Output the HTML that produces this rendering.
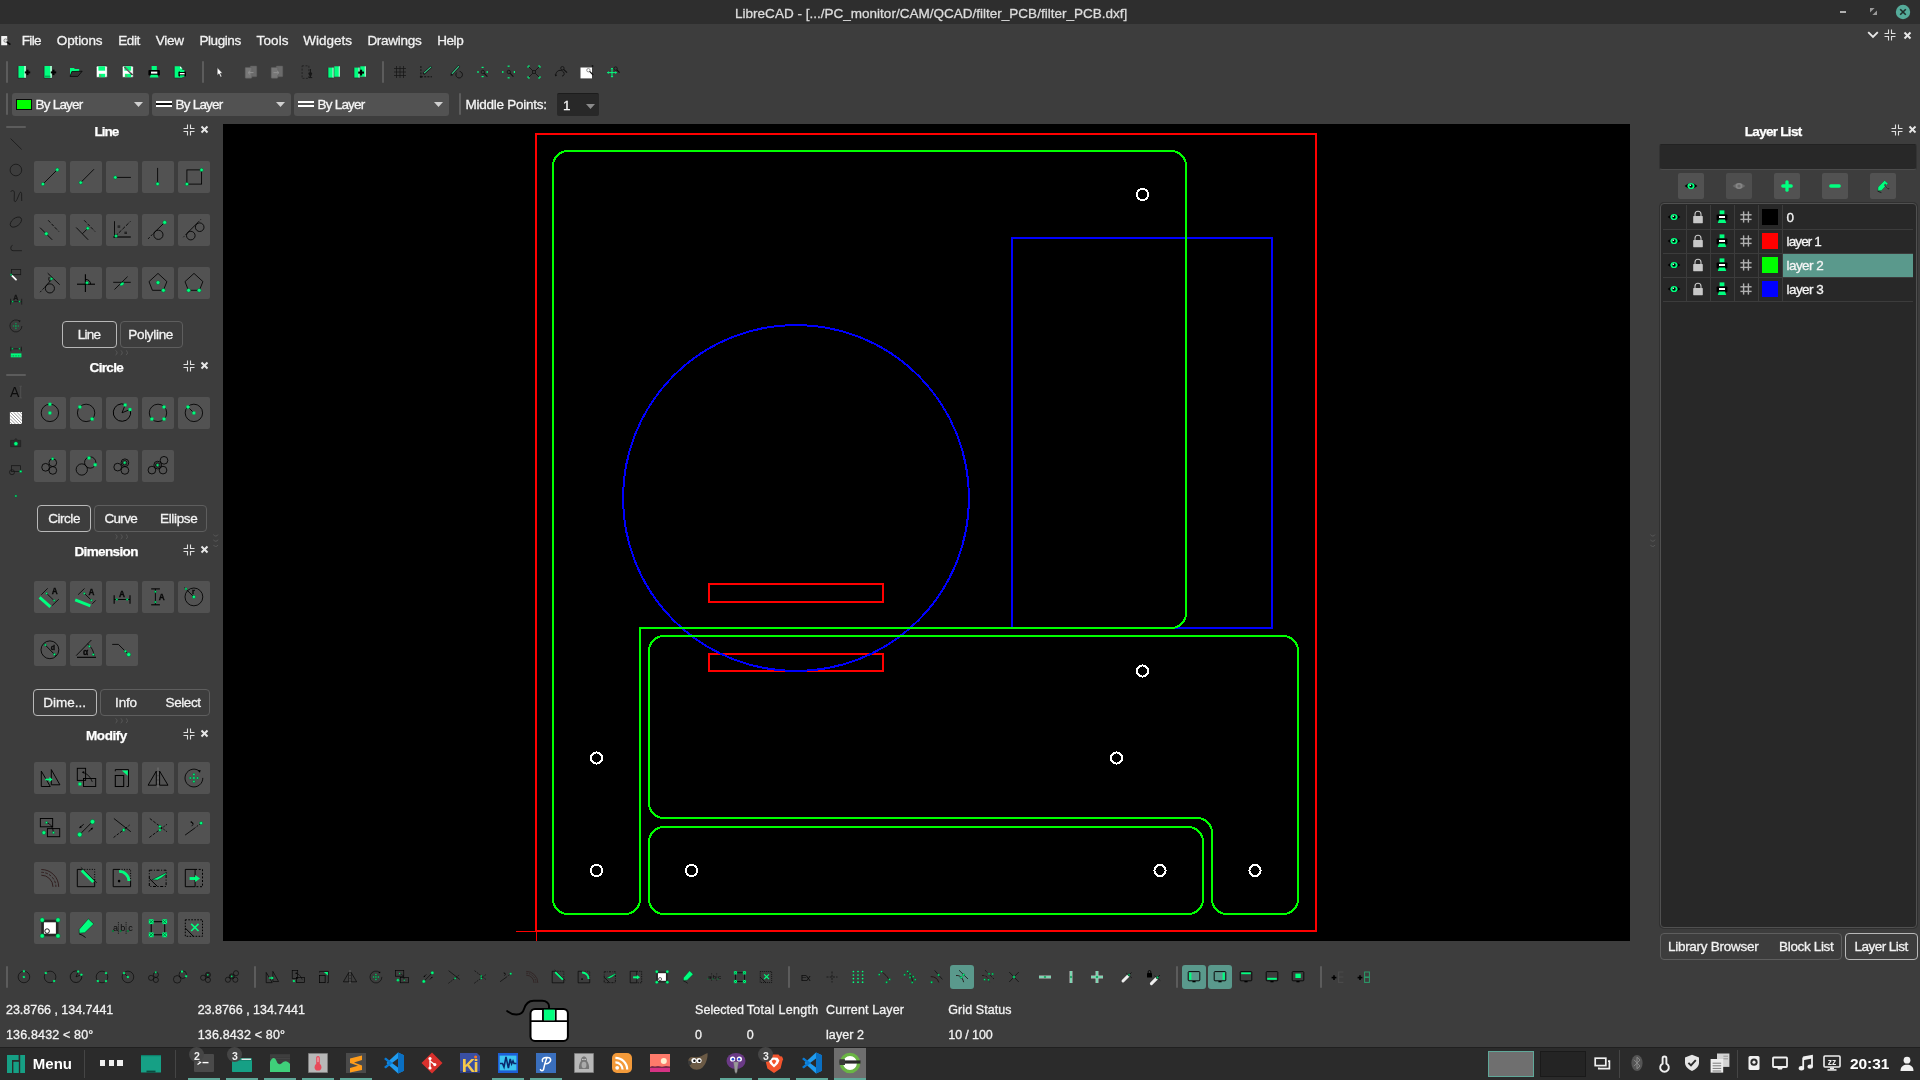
<!DOCTYPE html><html><head><meta charset="utf-8"><title>LibreCAD</title><style>
html,body{margin:0;padding:0;background:#3d3d3d;width:1920px;height:1080px;overflow:hidden}
body{position:relative;font-family:"Liberation Sans",sans-serif;}
#w{position:absolute;left:0;top:0;width:1920px;height:1080px;will-change:transform}
.a{position:absolute}
.t{position:absolute;white-space:nowrap;line-height:20px;height:20px;-webkit-text-stroke:0.3px currentColor}
svg{overflow:visible}
</style></head><body><div id="w"><div class="a" style="left:0px;top:0px;width:1920px;height:24px;background:#2e2e2e;"></div>
<span class="t" style="top:3.5px;font-size:13.5px;color:#dcdcdc;left:735.05px;letter-spacing:0.011px;">LibreCAD - [.../PC_monitor/CAM/QCAD/filter_PCB/filter_PCB.dxf]</span>
<div class="a" style="left:1840px;top:11px;width:6.4px;height:2px;background:#b0b0b0;"></div>
<svg style="position:absolute;left:1869.6px;top:8.4px" width="7" height="7" viewBox="0 0 7 7"><path d="M0 0 L4.6 0 L0 4.6 Z" fill="#9a9a9a"/><path d="M7 7 L2.4 7 L7 2.4 Z" fill="#9a9a9a"/></svg>
<svg style="position:absolute;left:1895px;top:4px" width="16" height="16" viewBox="0 0 16 16"><circle cx="8" cy="8" r="7.2" fill="#55ab9a"/><line x1="5.2" y1="5.2" x2="10.8" y2="10.8" stroke="#1f2d2a" stroke-width="1.6"/><line x1="10.8" y1="5.2" x2="5.2" y2="10.8" stroke="#1f2d2a" stroke-width="1.6"/></svg>
<span class="t" style="top:31px;font-size:13.5px;color:#f2f2f2;left:21.70px;letter-spacing:-0.616px;">File</span>
<span class="t" style="top:31px;font-size:13.5px;color:#f2f2f2;left:56.80px;letter-spacing:-0.120px;">Options</span>
<span class="t" style="top:31px;font-size:13.5px;color:#f2f2f2;left:118.20px;letter-spacing:-0.387px;">Edit</span>
<span class="t" style="top:31px;font-size:13.5px;color:#f2f2f2;left:155.70px;letter-spacing:-0.251px;">View</span>
<span class="t" style="top:31px;font-size:13.5px;color:#f2f2f2;left:199.40px;letter-spacing:-0.413px;">Plugins</span>
<span class="t" style="top:31px;font-size:13.5px;color:#f2f2f2;left:256.60px;letter-spacing:0.123px;">Tools</span>
<span class="t" style="top:31px;font-size:13.5px;color:#f2f2f2;left:303.30px;letter-spacing:-0.010px;">Widgets</span>
<span class="t" style="top:31px;font-size:13.5px;color:#f2f2f2;left:367.40px;letter-spacing:-0.281px;">Drawings</span>
<span class="t" style="top:31px;font-size:13.5px;color:#f2f2f2;left:437.20px;letter-spacing:-0.423px;">Help</span>
<svg style="position:absolute;left:0px;top:34px" width="12" height="12" viewBox="0 0 12 12"><rect x="1.2" y="2" width="6" height="9.2" fill="#f4f4f4" rx="0.5"/><circle cx="5.6" cy="6.6" r="1.7" fill="#e0e0e0" stroke="#777" stroke-width="0.8"/><line x1="6.8" y1="7.8" x2="10.4" y2="10.6" stroke="#0a0a0a" stroke-width="1.7"/></svg>
<svg style="position:absolute;left:1867.2px;top:30.4px" width="12" height="9" viewBox="0 0 12 9"><path d="M1.2 2.2 L6 7 L10.8 2.2" fill="none" stroke="#e8e8e8" stroke-width="1.9"/></svg>
<svg style="position:absolute;left:1884px;top:29px" width="12" height="12" viewBox="0 0 12 12"><path d="M4.5 0.5 L4.5 4.5 L0.5 4.5 M7.5 0.5 L7.5 4.5 L11.5 4.5 M4.5 11.5 L4.5 7.5 L0.5 7.5 M7.5 11.5 L7.5 7.5 L11.5 7.5" fill="none" stroke="#e0e0e0" stroke-width="1.1"/></svg>
<svg style="position:absolute;left:1902.6px;top:30.6px" width="9" height="9" viewBox="0 0 9 9"><line x1="1.5" y1="1.5" x2="7.5" y2="7.5" stroke="#e8e8e8" stroke-width="1.9"/><line x1="7.5" y1="1.5" x2="1.5" y2="7.5" stroke="#e8e8e8" stroke-width="1.9"/></svg>
<div class="a" style="left:6px;top:61px;width:2px;height:22px;background:#5c5c5c;border-radius:1px;"></div>
<svg style="position:absolute;left:15px;top:64px" width="16" height="16" viewBox="0 0 16 16"><rect x="3.2" y="2" width="7.4" height="12" fill="#00ff7f"/><rect x="9.4" y="2" width="1.3" height="12" fill="#e8fff2"/><path d="M3 2 L3 14.2 L10.8 14.2" fill="none" stroke="#222" stroke-width="0.6"/><line x1="9.8" y1="8.4" x2="15.2" y2="8.4" stroke="#000" stroke-width="2"/><line x1="12.5" y1="5.7" x2="12.5" y2="11.1" stroke="#000" stroke-width="2"/></svg>
<svg style="position:absolute;left:41px;top:64px" width="16" height="16" viewBox="0 0 16 16"><rect x="3.2" y="2" width="7.4" height="12" fill="#00ff7f"/><rect x="9.4" y="2" width="1.3" height="12" fill="#e8fff2"/><path d="M3 2 L3 14.2 L10.8 14.2" fill="none" stroke="#222" stroke-width="0.6"/><rect x="3.2" y="11.6" width="6.2" height="1.6" fill="#00b359"/><line x1="9.8" y1="8.4" x2="15.2" y2="8.4" stroke="#000" stroke-width="2"/><line x1="12.5" y1="5.7" x2="12.5" y2="11.1" stroke="#000" stroke-width="2"/></svg>
<svg style="position:absolute;left:67px;top:64px" width="16" height="16" viewBox="0 0 16 16"><path d="M3 4 L7 4 L7.8 5 L12.2 5 L12.2 7.6 L5 7.6 L3 12 Z" fill="#00ff7f"/><path d="M4.8 7.6 L15.2 7.2 L10.8 12.4 L3 12.4 Z" fill="#333" stroke="#000" stroke-width="0.7"/></svg>
<svg style="position:absolute;left:93px;top:64px" width="16" height="16" viewBox="0 0 16 16"><rect x="3.3" y="2" width="11" height="11.4" fill="#fff" stroke="#222" stroke-width="0.6" rx="1.2"/><rect x="5.4" y="2.3" width="6.8" height="4.4" fill="#00ff7f"/><rect x="5.9" y="9.8" width="6.3" height="3.4" fill="#00ff7f"/><rect x="6.6" y="10.6" width="1.6" height="2.2" fill="#6a6"/></svg>
<svg style="position:absolute;left:119px;top:64px" width="16" height="16" viewBox="0 0 16 16"><rect x="3.3" y="2" width="11" height="11.4" fill="#fff" stroke="#222" stroke-width="0.6" rx="1.2"/><rect x="5.4" y="2.3" width="6.8" height="4.4" fill="#00ff7f"/><rect x="5.9" y="9.8" width="6.3" height="3.4" fill="#00ff7f"/><rect x="6.6" y="10.6" width="1.6" height="2.2" fill="#6a6"/><line x1="5.5" y1="3" x2="13.5" y2="11" stroke="#333" stroke-width="1.6"/><line x1="6" y1="3.4" x2="12" y2="9.4" stroke="#ccc" stroke-width="0.6"/></svg>
<svg style="position:absolute;left:145px;top:64px" width="16" height="16" viewBox="0 0 16 16"><rect x="6.6" y="2" width="5.2" height="4.4" fill="#00ff7f"/><rect x="3.4" y="6.1" width="11.5" height="5.4" fill="#000" rx="0.8"/><rect x="6" y="7.6" width="6.3" height="2" fill="#fff"/><path d="M5.8 10.8 L12.5 10.8 L13.6 13.6 L4.7 13.6 Z" fill="#00ff7f"/></svg>
<svg style="position:absolute;left:171px;top:64px" width="16" height="16" viewBox="0 0 16 16"><path d="M3.4 2.2 L9 2.2 L11.3 4.5 L11.3 13.9 L3.4 13.9 Z" fill="#00ff7f"/><path d="M9 2.2 L11.3 4.5 L9 4.5 Z" fill="#fff"/><path d="M3.2 2.2 L3.2 14 L11.3 14" fill="none" stroke="#222" stroke-width="0.6"/><rect x="7.4" y="7.4" width="7.6" height="5" fill="#000" rx="1"/><rect x="9" y="6" width="4.4" height="2" fill="#00ff7f"/><rect x="8.8" y="9" width="4.8" height="1.4" fill="#fff"/><rect x="9" y="11.3" width="4.4" height="1.6" fill="#00ff7f"/></svg>
<svg style="position:absolute;left:212px;top:64px" width="16" height="16" viewBox="0 0 16 16"><path d="M5.2 3.6 L5.2 11.4 L7 9.8 L8.6 13.2 L9.9 12.6 L8.4 9.3 L10.6 9.2 Z" fill="#fff" stroke="#222" stroke-width="0.5"/></svg>
<svg style="position:absolute;left:243px;top:64px" width="16" height="16" viewBox="0 0 16 16"><rect x="7.2" y="2" width="6.6" height="10.8" fill="#6b6b6b" stroke="#5a5a5a" stroke-width="0.5" rx="0.6"/><rect x="2.2" y="3.4" width="6.6" height="10.8" fill="#777" stroke="#5f5f5f" stroke-width="0.5" rx="0.6"/><line x1="5.5" y1="8.6" x2="10.5" y2="8.6" stroke="#909090" stroke-width="1"/><path d="M7 6.8 L5 8.6 L7 10.4" fill="none" stroke="#909090" stroke-width="1"/></svg>
<svg style="position:absolute;left:269px;top:64px" width="16" height="16" viewBox="0 0 16 16"><rect x="7.2" y="2" width="6.6" height="10.8" fill="#6b6b6b" stroke="#5a5a5a" stroke-width="0.5" rx="0.6"/><rect x="2.2" y="3.4" width="6.6" height="10.8" fill="#777" stroke="#5f5f5f" stroke-width="0.5" rx="0.6"/><line x1="4.5" y1="8.6" x2="9.5" y2="8.6" stroke="#909090" stroke-width="1"/><path d="M8 6.8 L10 8.6 L8 10.4" fill="none" stroke="#909090" stroke-width="1"/></svg>
<svg style="position:absolute;left:299px;top:64px" width="16" height="16" viewBox="0 0 16 16"><rect x="3.1" y="1.8" width="6.8" height="12.6" fill="none" stroke="#1a1a1a" stroke-width="0.7" stroke-dasharray="2 1.4"/><path d="M11.4 5 L11.4 12.6 M10 9 L11.4 12.8 L12.8 9 Z M9.8 13.6 L13.2 13.6" fill="none" stroke="#151515" stroke-width="1"/></svg>
<svg style="position:absolute;left:326px;top:64px" width="16" height="16" viewBox="0 0 16 16"><rect x="2.1" y="3.6" width="5.2" height="10.2" fill="#00ff7f"/><rect x="6.6" y="3.6" width="0.9" height="10.2" fill="#dfe"/><rect x="8.3" y="2.3" width="5.2" height="10.4" fill="#00ff7f"/><rect x="12.8" y="2.3" width="0.9" height="10.4" fill="#dfe"/><path d="M2 3.6 L2 14 L7.4 14" fill="none" stroke="#222" stroke-width="0.5"/></svg>
<svg style="position:absolute;left:352px;top:64px" width="16" height="16" viewBox="0 0 16 16"><rect x="2.1" y="3.6" width="5.2" height="10.2" fill="#00ff7f"/><rect x="6.6" y="3.6" width="0.9" height="10.2" fill="#dfe"/><rect x="8.3" y="2.3" width="5.2" height="10.4" fill="#00ff7f"/><rect x="12.8" y="2.3" width="0.9" height="10.4" fill="#dfe"/><path d="M2 3.6 L2 14 L7.4 14" fill="none" stroke="#222" stroke-width="0.5"/><line x1="6.2" y1="8.6" x2="12" y2="8.6" stroke="#000" stroke-width="2.1"/><line x1="9.1" y1="5.7" x2="9.1" y2="11.5" stroke="#000" stroke-width="2.1"/></svg>
<svg style="position:absolute;left:392px;top:64px" width="16" height="16" viewBox="0 0 16 16"><line x1="4.5" y1="2" x2="4.5" y2="14" stroke="#151515" stroke-width="0.75"/><line x1="8" y1="2" x2="8" y2="14" stroke="#151515" stroke-width="0.75"/><line x1="11.5" y1="2" x2="11.5" y2="14" stroke="#151515" stroke-width="0.75"/><line x1="2" y1="4.5" x2="14" y2="4.5" stroke="#151515" stroke-width="0.75"/><line x1="2" y1="8" x2="14" y2="8" stroke="#151515" stroke-width="0.75"/><line x1="2" y1="11.5" x2="14" y2="11.5" stroke="#151515" stroke-width="0.75"/></svg>
<svg style="position:absolute;left:418px;top:64px" width="16" height="16" viewBox="0 0 16 16"><line x1="2.9" y1="2" x2="2.9" y2="12" stroke="#111" stroke-width="1" stroke-dasharray="2 1.2"/><line x1="3" y1="12.8" x2="14" y2="12.8" stroke="#111" stroke-width="1" stroke-dasharray="2 1.2"/><circle cx="2.9" cy="12.8" r="1.1" fill="#111"/><line x1="5.3" y1="10" x2="13.4" y2="2.6" stroke="#181818" stroke-width="2.4"/><line x1="6.1" y1="9.2" x2="13.1" y2="2.9" stroke="#3c8" stroke-width="1.1"/></svg>
<svg style="position:absolute;left:448px;top:64px" width="16" height="16" viewBox="0 0 16 16"><line x1="3.1" y1="10.7" x2="11.3" y2="1.9" stroke="#181818" stroke-width="2.4"/><line x1="3.9" y1="9.9" x2="11" y2="2.2" stroke="#3c8" stroke-width="1.1"/><path d="M8.6 8.6 A3.3 3.3 0 1 0 11.6 7.4" fill="none" stroke="#111" stroke-width="0.9"/><path d="M2.2 11.6 L4 9.6 L4.6 11.4 Z" fill="#111"/></svg>
<svg style="position:absolute;left:474px;top:64px" width="16" height="16" viewBox="0 0 16 16"><line x1="7.6" y1="3.4" x2="9.6" y2="3.4" stroke="#00ff7f" stroke-width="1.2"/><line x1="7.6" y1="12.6" x2="9.6" y2="12.6" stroke="#00ff7f" stroke-width="1.2"/><line x1="4" y1="7" x2="4" y2="9" stroke="#00ff7f" stroke-width="1.2"/><line x1="13.2" y1="7" x2="13.2" y2="9" stroke="#00ff7f" stroke-width="1.2"/><circle cx="8.8" cy="8" r="1.7" fill="none" stroke="#111" stroke-width="0.8"/><line x1="9.99" y1="9.19" x2="13.39" y2="12.59" stroke="#111" stroke-width="1.2"/></svg>
<svg style="position:absolute;left:500px;top:64px" width="16" height="16" viewBox="0 0 16 16"><line x1="7.6" y1="2.2" x2="9.6" y2="2.2" stroke="#00ff7f" stroke-width="1.2"/><line x1="7.6" y1="13.8" x2="9.6" y2="13.8" stroke="#00ff7f" stroke-width="1.2"/><line x1="2.8" y1="7" x2="2.8" y2="9" stroke="#00ff7f" stroke-width="1.2"/><line x1="14.4" y1="7" x2="14.4" y2="9" stroke="#00ff7f" stroke-width="1.2"/><circle cx="8.8" cy="8" r="1.7" fill="none" stroke="#111" stroke-width="0.8"/><line x1="9.99" y1="9.19" x2="13.39" y2="12.59" stroke="#111" stroke-width="1.2"/></svg>
<svg style="position:absolute;left:526px;top:64px" width="16" height="16" viewBox="0 0 16 16"><line x1="2.5" y1="2.5" x2="13.5" y2="13.5" stroke="#111" stroke-width="0.8"/><line x1="13.5" y1="2.5" x2="2.5" y2="13.5" stroke="#111" stroke-width="0.8"/><path d="M3.8 2 L2 2 L2 3.8" fill="none" stroke="#00ff7f" stroke-width="1"/><path d="M12.2 2 L14 2 L14 3.8" fill="none" stroke="#00ff7f" stroke-width="1"/><path d="M3.8 14 L2 14 L2 12.2" fill="none" stroke="#00ff7f" stroke-width="1"/><path d="M12.2 14 L14 14 L14 12.2" fill="none" stroke="#00ff7f" stroke-width="1"/><circle cx="8" cy="8" r="1.6" fill="#3d3d3d" stroke="#111" stroke-width="0.8"/></svg>
<svg style="position:absolute;left:553px;top:64px" width="16" height="16" viewBox="0 0 16 16"><path d="M2.6 11.6 C3 6 8 5 10.6 8 C12 10 10.6 12.4 9 12" fill="none" stroke="#111" stroke-width="0.9"/><path d="M1.6 10.4 L2.6 12.6 L4.2 11 Z" fill="#111"/><circle cx="9.4" cy="4.2" r="1.7" fill="none" stroke="#111" stroke-width="0.8"/><line x1="10.6" y1="5.4" x2="14" y2="8.6" stroke="#111" stroke-width="1.2"/></svg>
<svg style="position:absolute;left:579px;top:64px" width="16" height="16" viewBox="0 0 16 16"><rect x="1.5" y="3.5" width="11.5" height="10.9" fill="#fff"/><circle cx="9.4" cy="6.2" r="1.7" fill="none" stroke="#777" stroke-width="0.8"/><line x1="10.6" y1="7.4" x2="14.2" y2="11" stroke="#111" stroke-width="1.2"/><line x1="12.5" y1="2" x2="14.5" y2="2" stroke="#111" stroke-width="0.8"/><line x1="13.5" y1="1" x2="13.5" y2="3" stroke="#111" stroke-width="0.8"/></svg>
<svg style="position:absolute;left:605px;top:64px" width="16" height="16" viewBox="0 0 16 16"><line x1="2.5" y1="8.6" x2="11.5" y2="8.6" stroke="#00ff7f" stroke-width="1"/><line x1="7" y1="4.1" x2="7" y2="13.1" stroke="#00ff7f" stroke-width="1"/><path d="M3.6 7.6 L2.4 8.6 L3.6 9.6 M10.4 7.6 L11.6 8.6 L10.4 9.6 M6 5.2 L7 4 L8 5.2 M6 12 L7 13.2 L8 12" fill="none" stroke="#00ff7f" stroke-width="0.9"/><circle cx="10.6" cy="4.6" r="1.7" fill="none" stroke="#111" stroke-width="0.8"/><line x1="11.8" y1="5.8" x2="14.6" y2="8.6" stroke="#111" stroke-width="1.2"/></svg>
<div class="a" style="left:202px;top:61px;width:2px;height:22px;background:#5c5c5c;border-radius:1px;"></div>
<div class="a" style="left:382px;top:61px;width:2px;height:22px;background:#5c5c5c;border-radius:1px;"></div>
<div class="a" style="left:6px;top:93px;width:2px;height:22px;background:#5c5c5c;border-radius:1px;"></div>
<div class="a" style="left:12px;top:93px;width:137px;height:23px;background:#525252;border-radius:3px;"></div><div class="a" style="left:16px;top:98.5px;width:16px;height:11.5px;background:#00ff00;border:1px solid #0a0a0a;box-sizing:border-box;"></div><span class="t" style="top:95px;font-size:13.5px;color:#f5f5f5;left:35.50px;letter-spacing:-0.782px;">By Layer</span><svg style="position:absolute;left:134px;top:102px" width="9" height="5" viewBox="0 0 9 5"><path d="M0 0 L9 0 L4.5 5 Z" fill="#d0d0d0"/></svg>
<div class="a" style="left:152px;top:93px;width:139px;height:23px;background:#525252;border-radius:3px;"></div><div class="a" style="left:156px;top:100.5px;width:16px;height:2px;background:#fff;"></div><div class="a" style="left:156px;top:104.5px;width:16px;height:2px;background:#fff;"></div><div class="a" style="left:156px;top:102.5px;width:16px;height:2px;background:#111;"></div><span class="t" style="top:95px;font-size:13.5px;color:#f5f5f5;left:175.50px;letter-spacing:-0.782px;">By Layer</span><svg style="position:absolute;left:276px;top:102px" width="9" height="5" viewBox="0 0 9 5"><path d="M0 0 L9 0 L4.5 5 Z" fill="#d0d0d0"/></svg>
<div class="a" style="left:294px;top:93px;width:155px;height:23px;background:#525252;border-radius:3px;"></div><div class="a" style="left:298px;top:100.5px;width:16px;height:2.5px;background:#fff;"></div><div class="a" style="left:298px;top:104.5px;width:16px;height:2.5px;background:#fff;"></div><span class="t" style="top:95px;font-size:13.5px;color:#f5f5f5;left:317.50px;letter-spacing:-0.782px;">By Layer</span><svg style="position:absolute;left:434px;top:102px" width="9" height="5" viewBox="0 0 9 5"><path d="M0 0 L9 0 L4.5 5 Z" fill="#d0d0d0"/></svg>
<div class="a" style="left:459px;top:93px;width:2px;height:22px;background:#5c5c5c;border-radius:1px;"></div>
<span class="t" style="top:95px;font-size:13.5px;color:#f5f5f5;left:465.40px;letter-spacing:-0.246px;">Middle Points:</span>
<div class="a" style="left:557px;top:93px;width:42px;height:23px;background:#282828;border-radius:2px;border-top:1px solid #1c1c1c;box-sizing:border-box;"></div>
<span class="t" style="top:96px;font-size:13.5px;color:#f5f5f5;left:563px;">1</span>
<svg style="position:absolute;left:586px;top:104px" width="9" height="5" viewBox="0 0 9 5"><path d="M0 0 L9 0 L4.5 5 Z" fill="#8a8a8a"/></svg>
<div class="a" style="left:6px;top:126px;width:20px;height:2px;background:#5c5c5c;border-radius:1px;"></div>
<svg style="position:absolute;left:8px;top:136px" width="16" height="16" viewBox="0 0 16 16"><line x1="2.6" y1="2.6" x2="13.7" y2="13.5" stroke="#161616" stroke-width="0.75"/></svg>
<svg style="position:absolute;left:8px;top:162px" width="16" height="16" viewBox="0 0 16 16"><circle cx="7.9" cy="8" r="5.8" fill="none" stroke="#161616" stroke-width="0.75"/></svg>
<svg style="position:absolute;left:8px;top:188px" width="16" height="16" viewBox="0 0 16 16"><path d="M2.6 3.8 C4 1.8 6.4 2.2 6.4 5 L6.2 12 C6.2 14.4 8 14 9 11.5 L11.5 5.5 C12.3 3.6 13.6 4 13.6 6 L13.7 13" fill="none" stroke="#161616" stroke-width="0.75"/></svg>
<svg style="position:absolute;left:8px;top:214px" width="16" height="16" viewBox="0 0 16 16"><ellipse cx="7.9" cy="8.1" rx="6.5" ry="3.9" fill="none" stroke="#161616" stroke-width="0.75" transform="rotate(-38 7.9 8.1)"/></svg>
<svg style="position:absolute;left:8px;top:240px" width="16" height="16" viewBox="0 0 16 16"><path d="M4.6 5.3 Q2.4 6 2.8 8.5 Q3 10.7 5 10.7 L13.9 10.7" fill="none" stroke="#161616" stroke-width="0.75"/></svg>
<svg style="position:absolute;left:8px;top:266px" width="16" height="16" viewBox="0 0 16 16"><rect x="3.4" y="3.4" width="9.3" height="5.3" fill="none" stroke="#161616" stroke-width="0.75"/><path d="M4.2 9.9 L8 13.6" fill="none" stroke="#fff" stroke-width="1.8" stroke-linecap="round"/><circle cx="3.1" cy="8.7" r="0.9" fill="#00ff7f" stroke="#063" stroke-width="0.5"/></svg>
<svg style="position:absolute;left:8px;top:292px" width="16" height="16" viewBox="0 0 16 16"><line x1="2.6" y1="6.8" x2="2.6" y2="12.6" stroke="#161616" stroke-width="0.75"/><line x1="13.7" y1="6.8" x2="13.7" y2="12.6" stroke="#161616" stroke-width="0.75"/><line x1="2.6" y1="9.6" x2="13.7" y2="9.6" stroke="#161616" stroke-width="0.7"/><circle cx="4.65" cy="9.6" r="0.8" fill="#00ff7f" stroke="#063" stroke-width="0.5"/><circle cx="11.5" cy="9.6" r="0.8" fill="#00ff7f" stroke="#063" stroke-width="0.5"/><text x="7.9" y="8" font-family="Liberation Sans, sans-serif" font-size="7" fill="#161616" font-weight="bold" text-anchor="middle" stroke="#161616" stroke-width="0.3">A</text></svg>
<svg style="position:absolute;left:8px;top:318px" width="16" height="16" viewBox="0 0 16 16"><path d="M11.6 3.2 A6 6 0 1 0 13.9 8" fill="none" stroke="#161616" stroke-width="0.75"/><path d="M10.2 2.2 L12.6 2.4 L11.8 4.6 Z" fill="#161616"/><circle cx="7.9" cy="8" r="0.9" fill="#0c9a52"/><circle cx="7.9" cy="5.6" r="0.8" fill="#0c9a52"/><circle cx="7.9" cy="10.4" r="0.8" fill="#0c9a52"/><circle cx="5.5" cy="8" r="0.8" fill="#0c9a52"/><circle cx="10.3" cy="8" r="0.8" fill="#0c9a52"/></svg>
<svg style="position:absolute;left:8px;top:344px" width="16" height="16" viewBox="0 0 16 16"><line x1="2.8" y1="2.7" x2="2.8" y2="7.3" stroke="#161616" stroke-width="0.75"/><line x1="13.4" y1="2.7" x2="13.4" y2="7.3" stroke="#161616" stroke-width="0.75"/><line x1="2.8" y1="4.8" x2="13.4" y2="4.8" stroke="#161616" stroke-width="0.7"/><circle cx="4.4" cy="4.8" r="0.8" fill="#00ff7f" stroke="#063" stroke-width="0.5"/><circle cx="11.5" cy="4.8" r="0.8" fill="#00ff7f" stroke="#063" stroke-width="0.5"/><rect x="2.8" y="9.4" width="10.6" height="3.9" fill="#00ff7f"/><line x1="3.6" y1="11.8" x2="12.8" y2="11.8" stroke="#0a8a48" stroke-width="1.2" stroke-dasharray="0.8 0.8"/></svg>
<svg style="position:absolute;left:8px;top:384px" width="16" height="16" viewBox="0 0 16 16"><text x="6.6" y="13" font-family="Liberation Sans, sans-serif" font-size="14" fill="#0c0c0c" font-weight="normal" text-anchor="middle">A</text><line x1="12.7" y1="2.2" x2="12.7" y2="13.9" stroke="#555" stroke-width="0.8"/><line x1="11.3" y1="2.2" x2="14.1" y2="2.2" stroke="#555" stroke-width="0.7"/><line x1="11.3" y1="13.9" x2="14.1" y2="13.9" stroke="#555" stroke-width="0.7"/></svg>
<svg style="position:absolute;left:8px;top:410px" width="16" height="16" viewBox="0 0 16 16"><rect x="1.9" y="2" width="12.1" height="12" fill="#fff"/><line x1="2" y1="11.9" x2="4.1" y2="14" stroke="#333" stroke-width="0.5"/><line x1="2" y1="8.6" x2="7.4" y2="14" stroke="#333" stroke-width="0.5"/><line x1="2" y1="5.3" x2="10.7" y2="14" stroke="#333" stroke-width="0.5"/><line x1="2" y1="2" x2="14" y2="14" stroke="#333" stroke-width="0.5"/><line x1="5.3" y1="2" x2="14" y2="10.7" stroke="#333" stroke-width="0.5"/><line x1="8.6" y1="2" x2="14" y2="7.4" stroke="#333" stroke-width="0.5"/><line x1="11.9" y1="2" x2="14" y2="4.1" stroke="#333" stroke-width="0.5"/></svg>
<svg style="position:absolute;left:8px;top:436px" width="16" height="16" viewBox="0 0 16 16"><path d="M2.6 4.4 L6 4.4 L7.9 2.4 L9.8 4.4 L12.7 4.4 L12.7 10.7 L2.6 10.7 Z" fill="#2c2c2c" stroke="#1a1a1a" stroke-width="0.5"/><circle cx="7.9" cy="7.7" r="2" fill="#00ff7f" stroke="#063" stroke-width="0.5"/></svg>
<svg style="position:absolute;left:8px;top:462px" width="16" height="16" viewBox="0 0 16 16"><rect x="3.4" y="3.7" width="9.1" height="5.7" fill="none" stroke="#161616" stroke-width="0.75"/><circle cx="4" cy="10.2" r="2.5" fill="none" stroke="#161616" stroke-width="0.75"/><circle cx="12.7" cy="9.4" r="1.2" fill="#00ff7f" stroke="#063" stroke-width="0.5"/></svg>
<svg style="position:absolute;left:8px;top:488px" width="16" height="16" viewBox="0 0 16 16"><circle cx="7.9" cy="8" r="1.1" fill="#00ff7f" stroke="#063" stroke-width="0.5"/></svg>
<div class="a" style="left:6px;top:374px;width:20px;height:2px;background:#5c5c5c;border-radius:1px;"></div>
<span class="t" style="top:122px;font-size:13.5px;color:#fff;font-weight:700;-webkit-text-stroke:0.25px currentColor;left:94.45px;letter-spacing:-0.952px;">Line</span><svg style="position:absolute;left:182.5px;top:123.6px" width="12" height="12" viewBox="0 0 12 12"><path d="M4.5 0.5 L4.5 4.5 L0.5 4.5 M7.5 0.5 L7.5 4.5 L11.5 4.5 M4.5 11.5 L4.5 7.5 L0.5 7.5 M7.5 11.5 L7.5 7.5 L11.5 7.5" fill="none" stroke="#e0e0e0" stroke-width="1.1"/></svg><svg style="position:absolute;left:199.5px;top:124.6px" width="9" height="9" viewBox="0 0 9 9"><line x1="1.5" y1="1.5" x2="7.5" y2="7.5" stroke="#e8e8e8" stroke-width="1.9"/><line x1="7.5" y1="1.5" x2="1.5" y2="7.5" stroke="#e8e8e8" stroke-width="1.9"/></svg>
<div class="a" style="left:34px;top:161px;width:32px;height:32px;background:#525252;border-radius:2px;"></div><svg style="position:absolute;left:38px;top:165px" width="24" height="24" viewBox="0 0 24 24"><line x1="4.9" y1="19.1" x2="19.3" y2="4.7" stroke="#000" stroke-width="0.85"/><circle cx="4.9" cy="19.1" r="1.7" fill="#00ff7f" stroke="#063" stroke-width="0.5"/><circle cx="19.3" cy="4.7" r="1.7" fill="#00ff7f" stroke="#063" stroke-width="0.5"/></svg><div class="a" style="left:70px;top:161px;width:32px;height:32px;background:#525252;border-radius:2px;"></div><svg style="position:absolute;left:74px;top:165px" width="24" height="24" viewBox="0 0 24 24"><line x1="6.7" y1="17.6" x2="20" y2="4.2" stroke="#000" stroke-width="0.85"/><circle cx="6.7" cy="17.6" r="1.7" fill="#00ff7f" stroke="#063" stroke-width="0.5"/></svg><div class="a" style="left:106px;top:161px;width:32px;height:32px;background:#525252;border-radius:2px;"></div><svg style="position:absolute;left:110px;top:165px" width="24" height="24" viewBox="0 0 24 24"><line x1="5.3" y1="12.4" x2="20.9" y2="12.4" stroke="#000" stroke-width="0.85"/><circle cx="5.3" cy="12.4" r="1.7" fill="#00ff7f" stroke="#063" stroke-width="0.5"/></svg><div class="a" style="left:142px;top:161px;width:32px;height:32px;background:#525252;border-radius:2px;"></div><svg style="position:absolute;left:146px;top:165px" width="24" height="24" viewBox="0 0 24 24"><line x1="11.6" y1="2.9" x2="11.6" y2="18.9" stroke="#000" stroke-width="0.85"/><circle cx="11.6" cy="18.9" r="1.7" fill="#00ff7f" stroke="#063" stroke-width="0.5"/></svg><div class="a" style="left:178px;top:161px;width:32px;height:32px;background:#525252;border-radius:2px;"></div><svg style="position:absolute;left:182px;top:165px" width="24" height="24" viewBox="0 0 24 24"><rect x="4.9" y="4.9" width="14.7" height="14.2" fill="none" stroke="#000" stroke-width="0.85"/><circle cx="4.9" cy="19.1" r="1.7" fill="#00ff7f" stroke="#063" stroke-width="0.5"/><circle cx="19.6" cy="4.9" r="1.7" fill="#00ff7f" stroke="#063" stroke-width="0.5"/></svg><div class="a" style="left:34px;top:214px;width:32px;height:32px;background:#525252;border-radius:2px;"></div><svg style="position:absolute;left:38px;top:218px" width="24" height="24" viewBox="0 0 24 24"><line x1="2.06" y1="9.65" x2="14.2" y2="21.8" stroke="#000" stroke-width="0.85"/><line x1="10.2" y1="2.3" x2="20.8" y2="13.5" stroke="#000" stroke-width="0.85" stroke-dasharray="3.2 1.6"/><circle cx="8.3" cy="15.7" r="1.8" fill="#00ff7f" stroke="#063" stroke-width="0.5"/></svg><div class="a" style="left:70px;top:214px;width:32px;height:32px;background:#525252;border-radius:2px;"></div><svg style="position:absolute;left:74px;top:218px" width="24" height="24" viewBox="0 0 24 24"><line x1="2.2" y1="9.5" x2="14.2" y2="21.8" stroke="#000" stroke-width="0.85"/><line x1="10.2" y1="2.3" x2="21" y2="13.5" stroke="#000" stroke-width="0.85" stroke-dasharray="3.2 1.6"/><line x1="8.5" y1="15.7" x2="13.8" y2="10.3" stroke="#000" stroke-width="0.85"/><circle cx="13.8" cy="10.3" r="1.5" fill="#00ff7f" stroke="#063" stroke-width="0.5"/></svg><div class="a" style="left:106px;top:214px;width:32px;height:32px;background:#525252;border-radius:2px;"></div><svg style="position:absolute;left:110px;top:218px" width="24" height="24" viewBox="0 0 24 24"><line x1="4.5" y1="3.2" x2="4.5" y2="19.7" stroke="#000" stroke-width="0.85"/><line x1="3.2" y1="19" x2="20.8" y2="19" stroke="#000" stroke-width="1.1"/><line x1="5.3" y1="18.3" x2="20.4" y2="3.4" stroke="#000" stroke-width="0.85" stroke-dasharray="3.6 1.4"/><line x1="7.6" y1="8" x2="10.2" y2="8" stroke="#000" stroke-width="0.7"/><line x1="7.6" y1="9.2" x2="10.2" y2="9.2" stroke="#000" stroke-width="0.7"/><line x1="14.4" y1="14.2" x2="17" y2="14.2" stroke="#000" stroke-width="0.7"/><line x1="14.4" y1="15.4" x2="17" y2="15.4" stroke="#000" stroke-width="0.7"/><circle cx="6" cy="18" r="1.5" fill="#00ff7f" stroke="#063" stroke-width="0.5"/></svg><div class="a" style="left:142px;top:214px;width:32px;height:32px;background:#525252;border-radius:2px;"></div><svg style="position:absolute;left:146px;top:218px" width="24" height="24" viewBox="0 0 24 24"><circle cx="12.4" cy="16.8" r="4.6" fill="none" stroke="#000" stroke-width="0.85"/><line x1="2.1" y1="20.9" x2="7.2" y2="15.5" stroke="#000" stroke-width="0.85" stroke-dasharray="2.4 1.6"/><line x1="7.2" y1="15.5" x2="18.7" y2="4.4" stroke="#000" stroke-width="0.85"/><circle cx="18.7" cy="4.4" r="1.9" fill="#00ff7f" stroke="#063" stroke-width="0.5"/></svg><div class="a" style="left:178px;top:214px;width:32px;height:32px;background:#525252;border-radius:2px;"></div><svg style="position:absolute;left:182px;top:218px" width="24" height="24" viewBox="0 0 24 24"><circle cx="8.8" cy="17.6" r="4.3" fill="none" stroke="#000" stroke-width="0.85"/><circle cx="17.7" cy="9.2" r="4.3" fill="none" stroke="#000" stroke-width="0.85"/><line x1="1.4" y1="19.2" x2="4.4" y2="15.9" stroke="#000" stroke-width="0.85" stroke-dasharray="1.2 1.6"/><line x1="4.4" y1="15.9" x2="16.2" y2="4.2" stroke="#000" stroke-width="0.85"/><line x1="16.2" y1="4.2" x2="18.8" y2="1.4" stroke="#000" stroke-width="0.85" stroke-dasharray="1.4 1.4"/></svg><div class="a" style="left:34px;top:267px;width:32px;height:32px;background:#525252;border-radius:2px;"></div><svg style="position:absolute;left:38px;top:271px" width="24" height="24" viewBox="0 0 24 24"><circle cx="11.9" cy="17.4" r="4.55" fill="none" stroke="#000" stroke-width="0.85"/><line x1="2.1" y1="21.2" x2="6.4" y2="16.6" stroke="#000" stroke-width="0.85" stroke-dasharray="2 1.6"/><line x1="6.4" y1="16.6" x2="14.2" y2="7.8" stroke="#000" stroke-width="0.85"/><line x1="9.7" y1="2.2" x2="21.7" y2="13.7" stroke="#000" stroke-width="0.85"/><path d="M11.2 6 A4 4 0 0 0 11.8 10.6" fill="none" stroke="#000" stroke-width="0.8"/><path d="M12.4 6.2 L15.4 7.8 L12.6 9.6 Z" fill="#00ff7f" stroke="#063" stroke-width="0.4"/></svg><div class="a" style="left:70px;top:267px;width:32px;height:32px;background:#525252;border-radius:2px;"></div><svg style="position:absolute;left:74px;top:271px" width="24" height="24" viewBox="0 0 24 24"><line x1="3" y1="13.2" x2="21" y2="13.2" stroke="#000" stroke-width="1.1"/><line x1="11.4" y1="3.2" x2="11.4" y2="20.9" stroke="#000" stroke-width="1.1"/><path d="M11.4 8.4 A4.8 4.8 0 0 1 16.6 13.2" fill="none" stroke="#000" stroke-width="0.9"/><circle cx="13" cy="11.8" r="1.5" fill="#00ff7f" stroke="#063" stroke-width="0.5"/></svg><div class="a" style="left:106px;top:267px;width:32px;height:32px;background:#525252;border-radius:2px;"></div><svg style="position:absolute;left:110px;top:271px" width="24" height="24" viewBox="0 0 24 24"><line x1="3.2" y1="11.3" x2="20.8" y2="11.3" stroke="#000" stroke-width="0.85"/><line x1="4.5" y1="18.5" x2="17.6" y2="5.6" stroke="#000" stroke-width="0.85"/><ellipse cx="12" cy="13" rx="2.3" ry="1.3" fill="#00ff7f" stroke="#063" stroke-width="0.4" transform="rotate(-30 12 13)"/></svg><div class="a" style="left:142px;top:267px;width:32px;height:32px;background:#525252;border-radius:2px;"></div><svg style="position:absolute;left:146px;top:271px" width="24" height="24" viewBox="0 0 24 24"><path d="M12 2.4 L20.9 10.6 L17.4 19.3 L6.4 19.3 L3 10.6 Z" fill="none" stroke="#000" stroke-width="0.85"/><circle cx="12" cy="11.6" r="1.9" fill="#00ff7f" stroke="#063" stroke-width="0.5"/><circle cx="17.4" cy="19.3" r="1.9" fill="#00ff7f" stroke="#063" stroke-width="0.5"/></svg><div class="a" style="left:178px;top:267px;width:32px;height:32px;background:#525252;border-radius:2px;"></div><svg style="position:absolute;left:182px;top:271px" width="24" height="24" viewBox="0 0 24 24"><path d="M12 2.4 L20.9 10.6 L17.4 19.3 L6.4 19.3 L3 10.6 Z" fill="none" stroke="#000" stroke-width="0.85"/><circle cx="6.6" cy="19.3" r="1.9" fill="#00ff7f" stroke="#063" stroke-width="0.5"/><circle cx="17.2" cy="19.3" r="1.9" fill="#00ff7f" stroke="#063" stroke-width="0.5"/></svg>
<div class="a" style="left:62px;top:320.5px;width:54.5px;height:27px;border:1.5px solid #b8b8b8;border-radius:4px;box-sizing:border-box;"></div><span class="t" style="top:324.7px;font-size:13.5px;color:#f2f2f2;left:77.75px;letter-spacing:-0.743px;">Line</span><div class="a" style="left:119.5px;top:320.5px;width:63.5px;height:27px;border:1.5px solid #5e5e5e;border-radius:4px;box-sizing:border-box;"></div><span class="t" style="top:324.7px;font-size:13.5px;color:#f2f2f2;left:128.25px;letter-spacing:-0.311px;">Polyline</span>
<svg style="position:absolute;left:115px;top:350px" width="16" height="6" viewBox="0 0 16 6"><path d="M0.5 0.5 A2.4 2.4 0 0 1 0.5 5" fill="none" stroke="#5a5a5a" stroke-width="0.9"/><path d="M5.7 0.5 A2.4 2.4 0 0 1 5.7 5" fill="none" stroke="#5a5a5a" stroke-width="0.9"/><path d="M10.9 0.5 A2.4 2.4 0 0 1 10.9 5" fill="none" stroke="#5a5a5a" stroke-width="0.9"/></svg>
<span class="t" style="top:358px;font-size:13.5px;color:#fff;font-weight:700;-webkit-text-stroke:0.25px currentColor;left:89.60px;letter-spacing:-0.663px;">Circle</span><svg style="position:absolute;left:182.5px;top:359.6px" width="12" height="12" viewBox="0 0 12 12"><path d="M4.5 0.5 L4.5 4.5 L0.5 4.5 M7.5 0.5 L7.5 4.5 L11.5 4.5 M4.5 11.5 L4.5 7.5 L0.5 7.5 M7.5 11.5 L7.5 7.5 L11.5 7.5" fill="none" stroke="#e0e0e0" stroke-width="1.1"/></svg><svg style="position:absolute;left:199.5px;top:360.6px" width="9" height="9" viewBox="0 0 9 9"><line x1="1.5" y1="1.5" x2="7.5" y2="7.5" stroke="#e8e8e8" stroke-width="1.9"/><line x1="7.5" y1="1.5" x2="1.5" y2="7.5" stroke="#e8e8e8" stroke-width="1.9"/></svg>
<div class="a" style="left:34px;top:397px;width:32px;height:32px;background:#525252;border-radius:2px;"></div><svg style="position:absolute;left:38px;top:401px" width="24" height="24" viewBox="0 0 24 24"><circle cx="11.9" cy="11.9" r="8.7" fill="none" stroke="#000" stroke-width="0.85"/><rect x="10.4" y="10.4" width="3" height="3" fill="#00ff7f" stroke="#0a5" stroke-width="0.4" rx="0.7"/><rect x="10.4" y="1.8" width="3" height="3" fill="#00ff7f" stroke="#0a5" stroke-width="0.4" rx="0.7"/></svg><div class="a" style="left:70px;top:397px;width:32px;height:32px;background:#525252;border-radius:2px;"></div><svg style="position:absolute;left:74px;top:401px" width="24" height="24" viewBox="0 0 24 24"><circle cx="12.1" cy="11.9" r="8.7" fill="none" stroke="#000" stroke-width="0.85"/><rect x="4.35" y="4.55" width="3" height="3" fill="#00ff7f" stroke="#0a5" stroke-width="0.4" rx="0.7"/><rect x="16.6" y="16.6" width="3" height="3" fill="#00ff7f" stroke="#0a5" stroke-width="0.4" rx="0.7"/></svg><div class="a" style="left:106px;top:397px;width:32px;height:32px;background:#525252;border-radius:2px;"></div><svg style="position:absolute;left:110px;top:401px" width="24" height="24" viewBox="0 0 24 24"><path d="M15.2 3.5 A8.7 8.7 0 1 0 20.4 9.4" fill="none" stroke="#000" stroke-width="1"/><path d="M15.2 3.9 L12 11.8 L20 8.5" fill="none" stroke="#000" stroke-width="0.9"/><rect x="13.7" y="2.4" width="3" height="3" fill="#00ff7f" stroke="#0a5" stroke-width="0.4" rx="0.7"/><rect x="18.5" y="7" width="3" height="3" fill="#00ff7f" stroke="#0a5" stroke-width="0.4" rx="0.7"/></svg><div class="a" style="left:142px;top:397px;width:32px;height:32px;background:#525252;border-radius:2px;"></div><svg style="position:absolute;left:146px;top:401px" width="24" height="24" viewBox="0 0 24 24"><circle cx="12" cy="11.9" r="8.7" fill="none" stroke="#000" stroke-width="0.85"/><rect x="16.5" y="4.55" width="3" height="3" fill="#00ff7f" stroke="#0a5" stroke-width="0.4" rx="0.7"/><rect x="4.4" y="16.6" width="3" height="3" fill="#00ff7f" stroke="#0a5" stroke-width="0.4" rx="0.7"/><rect x="16.5" y="16.6" width="3" height="3" fill="#00ff7f" stroke="#0a5" stroke-width="0.4" rx="0.7"/></svg><div class="a" style="left:178px;top:397px;width:32px;height:32px;background:#525252;border-radius:2px;"></div><svg style="position:absolute;left:182px;top:401px" width="24" height="24" viewBox="0 0 24 24"><circle cx="11.9" cy="11.9" r="8.7" fill="none" stroke="#000" stroke-width="0.85"/><line x1="6" y1="6.05" x2="11.9" y2="11.9" stroke="#000" stroke-width="0.85"/><rect x="4.5" y="4.55" width="3" height="3" fill="#00ff7f" stroke="#0a5" stroke-width="0.4" rx="0.7"/><rect x="10.4" y="10.4" width="3" height="3" fill="#00ff7f" stroke="#0a5" stroke-width="0.4" rx="0.7"/></svg><div class="a" style="left:34px;top:450px;width:32px;height:32px;background:#525252;border-radius:2px;"></div><svg style="position:absolute;left:38px;top:454px" width="24" height="24" viewBox="0 0 24 24"><circle cx="7.6" cy="13.3" r="3.85" fill="none" stroke="#000" stroke-width="0.85"/><circle cx="14.8" cy="8.75" r="3.85" fill="none" stroke="#000" stroke-width="0.85"/><circle cx="14.8" cy="16.4" r="3.85" fill="none" stroke="#000" stroke-width="0.85"/><circle cx="14.6" cy="4.8" r="1.4" fill="#00ff7f" stroke="#063" stroke-width="0.5"/></svg><div class="a" style="left:70px;top:450px;width:32px;height:32px;background:#525252;border-radius:2px;"></div><svg style="position:absolute;left:74px;top:454px" width="24" height="24" viewBox="0 0 24 24"><circle cx="7.8" cy="15.5" r="5.65" fill="none" stroke="#000" stroke-width="0.85"/><circle cx="16.2" cy="8.5" r="5.65" fill="none" stroke="#000" stroke-width="0.85"/><rect x="13.5" y="2.4" width="3" height="3" fill="#00ff7f" stroke="#0a5" stroke-width="0.4" rx="0.7"/><rect x="19.7" y="9.2" width="3" height="3" fill="#00ff7f" stroke="#0a5" stroke-width="0.4" rx="0.7"/></svg><div class="a" style="left:106px;top:450px;width:32px;height:32px;background:#525252;border-radius:2px;"></div><svg style="position:absolute;left:110px;top:454px" width="24" height="24" viewBox="0 0 24 24"><circle cx="7.7" cy="13.1" r="3.85" fill="none" stroke="#000" stroke-width="0.85"/><circle cx="14.9" cy="8.75" r="3.85" fill="none" stroke="#000" stroke-width="0.85"/><circle cx="14.9" cy="16.4" r="3.85" fill="none" stroke="#000" stroke-width="0.85"/><circle cx="14.7" cy="8.75" r="2.3" fill="none" stroke="#000" stroke-width="0.7"/><circle cx="14.7" cy="8.75" r="1.2" fill="#00ff7f" stroke="#063" stroke-width="0.5"/></svg><div class="a" style="left:142px;top:450px;width:32px;height:32px;background:#525252;border-radius:2px;"></div><svg style="position:absolute;left:146px;top:454px" width="24" height="24" viewBox="0 0 24 24"><circle cx="5.9" cy="16.1" r="3.85" fill="none" stroke="#000" stroke-width="0.85"/><circle cx="17" cy="16.1" r="3.85" fill="none" stroke="#000" stroke-width="0.85"/><circle cx="18" cy="6.3" r="3.85" fill="none" stroke="#000" stroke-width="0.85"/><circle cx="11.7" cy="11.1" r="3.85" fill="none" stroke="#000" stroke-width="0.85"/><circle cx="11.7" cy="11.1" r="2.3" fill="none" stroke="#000" stroke-width="0.7"/><circle cx="11.6" cy="11.1" r="1.2" fill="#00ff7f" stroke="#063" stroke-width="0.5"/></svg>
<div class="a" style="left:37.3px;top:504.5px;width:54.2px;height:27px;border:1.5px solid #b8b8b8;border-radius:4px;box-sizing:border-box;"></div><span class="t" style="top:508.7px;font-size:13.5px;color:#f2f2f2;left:48.20px;letter-spacing:-0.461px;">Circle</span><div class="a" style="left:94.4px;top:504.5px;width:112.4px;height:27px;border:1.5px solid #5e5e5e;border-radius:4px;box-sizing:border-box;"></div><span class="t" style="top:508.7px;font-size:13.5px;color:#f2f2f2;left:104.45px;letter-spacing:-0.680px;">Curve</span><span class="t" style="top:508.7px;font-size:13.5px;color:#f2f2f2;left:160.00px;letter-spacing:-0.329px;">Ellipse</span>
<svg style="position:absolute;left:115px;top:534px" width="16" height="6" viewBox="0 0 16 6"><path d="M0.5 0.5 A2.4 2.4 0 0 1 0.5 5" fill="none" stroke="#5a5a5a" stroke-width="0.9"/><path d="M5.7 0.5 A2.4 2.4 0 0 1 5.7 5" fill="none" stroke="#5a5a5a" stroke-width="0.9"/><path d="M10.9 0.5 A2.4 2.4 0 0 1 10.9 5" fill="none" stroke="#5a5a5a" stroke-width="0.9"/></svg>
<span class="t" style="top:542px;font-size:13.5px;color:#fff;font-weight:700;-webkit-text-stroke:0.25px currentColor;left:74.40px;letter-spacing:-0.627px;">Dimension</span><svg style="position:absolute;left:182.5px;top:543.6px" width="12" height="12" viewBox="0 0 12 12"><path d="M4.5 0.5 L4.5 4.5 L0.5 4.5 M7.5 0.5 L7.5 4.5 L11.5 4.5 M4.5 11.5 L4.5 7.5 L0.5 7.5 M7.5 11.5 L7.5 7.5 L11.5 7.5" fill="none" stroke="#e0e0e0" stroke-width="1.1"/></svg><svg style="position:absolute;left:199.5px;top:544.6px" width="9" height="9" viewBox="0 0 9 9"><line x1="1.5" y1="1.5" x2="7.5" y2="7.5" stroke="#e8e8e8" stroke-width="1.9"/><line x1="7.5" y1="1.5" x2="1.5" y2="7.5" stroke="#e8e8e8" stroke-width="1.9"/></svg>
<div class="a" style="left:34px;top:581px;width:32px;height:32px;background:#525252;border-radius:2px;"></div><svg style="position:absolute;left:38px;top:585px" width="24" height="24" viewBox="0 0 24 24"><line x1="1.6" y1="12.4" x2="12.4" y2="21.8" stroke="#00ff7f" stroke-width="3"/><line x1="3.3" y1="9.7" x2="9.7" y2="3.3" stroke="#000" stroke-width="0.8"/><line x1="14.2" y1="20.5" x2="20.8" y2="14.2" stroke="#000" stroke-width="0.8"/><line x1="8.5" y1="8.3" x2="16.2" y2="15.7" stroke="#000" stroke-width="0.8"/><circle cx="8.6" cy="8.4" r="1" fill="#00ff7f" stroke="#063" stroke-width="0.5"/><circle cx="16.1" cy="15.6" r="1" fill="#00ff7f" stroke="#063" stroke-width="0.5"/><text x="16.7" y="9.2" font-family="Liberation Sans, sans-serif" font-size="8.2" fill="#080808" font-weight="bold" text-anchor="middle" stroke="#080808" stroke-width="0.3">A</text></svg><div class="a" style="left:70px;top:581px;width:32px;height:32px;background:#525252;border-radius:2px;"></div><svg style="position:absolute;left:74px;top:585px" width="24" height="24" viewBox="0 0 24 24"><line x1="1.2" y1="14.8" x2="16.4" y2="20.9" stroke="#00ff7f" stroke-width="3"/><line x1="4.1" y1="9.7" x2="10.5" y2="3.5" stroke="#000" stroke-width="0.8"/><line x1="18.3" y1="18.8" x2="21.7" y2="15.4" stroke="#000" stroke-width="0.8"/><line x1="10.2" y1="8.3" x2="17.5" y2="15.4" stroke="#000" stroke-width="0.8"/><circle cx="10.3" cy="8.4" r="1" fill="#00ff7f" stroke="#063" stroke-width="0.5"/><circle cx="17.4" cy="15.3" r="1" fill="#00ff7f" stroke="#063" stroke-width="0.5"/><text x="17.4" y="9.9" font-family="Liberation Sans, sans-serif" font-size="8.2" fill="#080808" font-weight="bold" text-anchor="middle" stroke="#080808" stroke-width="0.3">A</text></svg><div class="a" style="left:106px;top:581px;width:32px;height:32px;background:#525252;border-radius:2px;"></div><svg style="position:absolute;left:110px;top:585px" width="24" height="24" viewBox="0 0 24 24"><line x1="4.15" y1="14.5" x2="20" y2="14.5" stroke="#000" stroke-width="0.9"/><line x1="4.15" y1="10.2" x2="4.15" y2="18.8" stroke="#000" stroke-width="1.1"/><line x1="20" y1="10.2" x2="20" y2="18.8" stroke="#000" stroke-width="1.1"/><circle cx="6.9" cy="14.5" r="1" fill="#00ff7f" stroke="#063" stroke-width="0.5"/><circle cx="17.1" cy="14.5" r="1" fill="#00ff7f" stroke="#063" stroke-width="0.5"/><text x="12" y="11.6" font-family="Liberation Sans, sans-serif" font-size="8.2" fill="#080808" font-weight="bold" text-anchor="middle" stroke="#080808" stroke-width="0.3">A</text></svg><div class="a" style="left:142px;top:581px;width:32px;height:32px;background:#525252;border-radius:2px;"></div><svg style="position:absolute;left:146px;top:585px" width="24" height="24" viewBox="0 0 24 24"><line x1="9.4" y1="3.9" x2="9.4" y2="19.8" stroke="#000" stroke-width="0.9"/><line x1="5.2" y1="3.9" x2="13.9" y2="3.9" stroke="#000" stroke-width="1.1"/><line x1="5.2" y1="19.8" x2="13.9" y2="19.8" stroke="#000" stroke-width="1.1"/><circle cx="9.4" cy="6.8" r="1" fill="#00ff7f" stroke="#063" stroke-width="0.5"/><circle cx="9.4" cy="17.1" r="1" fill="#00ff7f" stroke="#063" stroke-width="0.5"/><text x="15.8" y="14.5" font-family="Liberation Sans, sans-serif" font-size="8.2" fill="#080808" font-weight="bold" text-anchor="middle" stroke="#080808" stroke-width="0.3">A</text></svg><div class="a" style="left:178px;top:581px;width:32px;height:32px;background:#525252;border-radius:2px;"></div><svg style="position:absolute;left:182px;top:585px" width="24" height="24" viewBox="0 0 24 24"><circle cx="11.9" cy="11.9" r="8.9" fill="none" stroke="#000" stroke-width="0.85"/><line x1="11.9" y1="11.9" x2="2.5" y2="2.7" stroke="#000" stroke-width="0.9"/><circle cx="11.9" cy="11.9" r="1.6" fill="#00ff7f" stroke="#063" stroke-width="0.5"/><circle cx="4" cy="3.9" r="1.1" fill="#00ff7f" stroke="#063" stroke-width="0.5"/><text x="11.4" y="8.7" font-family="Liberation Sans, sans-serif" font-size="7" fill="#080808" font-weight="bold" text-anchor="middle" stroke="#080808" stroke-width="0.3">r</text></svg><div class="a" style="left:34px;top:634px;width:32px;height:32px;background:#525252;border-radius:2px;"></div><svg style="position:absolute;left:38px;top:638px" width="24" height="24" viewBox="0 0 24 24"><circle cx="11.9" cy="11.8" r="8.9" fill="none" stroke="#000" stroke-width="0.85"/><line x1="6.2" y1="5.9" x2="17.9" y2="17.8" stroke="#000" stroke-width="0.9"/><circle cx="7.3" cy="7" r="1.1" fill="#00ff7f" stroke="#063" stroke-width="0.5"/><circle cx="16.4" cy="16.4" r="1.1" fill="#00ff7f" stroke="#063" stroke-width="0.5"/><text x="15" y="11.6" font-family="Liberation Sans, sans-serif" font-size="7" fill="#080808" font-weight="bold" text-anchor="middle" stroke="#080808" stroke-width="0.3">d</text></svg><div class="a" style="left:70px;top:634px;width:32px;height:32px;background:#525252;border-radius:2px;"></div><svg style="position:absolute;left:74px;top:638px" width="24" height="24" viewBox="0 0 24 24"><line x1="3" y1="19.3" x2="22" y2="19.3" stroke="#000" stroke-width="1.1"/><line x1="2.2" y1="17.6" x2="17.4" y2="2" stroke="#000" stroke-width="0.85"/><path d="M13.6 6 A16 16 0 0 1 20 17.8" fill="none" stroke="#000" stroke-width="0.8"/><circle cx="15.4" cy="8.3" r="1.1" fill="#00ff7f" stroke="#063" stroke-width="0.5"/><circle cx="19.3" cy="16.6" r="1.1" fill="#00ff7f" stroke="#063" stroke-width="0.5"/><text x="11.6" y="16.6" font-family="Liberation Sans, sans-serif" font-size="8.5" fill="#080808" font-weight="bold" text-anchor="middle" stroke="#080808" stroke-width="0.3">α</text></svg><div class="a" style="left:106px;top:634px;width:32px;height:32px;background:#525252;border-radius:2px;"></div><svg style="position:absolute;left:110px;top:638px" width="24" height="24" viewBox="0 0 24 24"><path d="M2.2 6.4 L8.4 6.4 L18.7 16.6" fill="none" stroke="#000" stroke-width="0.85"/><circle cx="15.4" cy="13.3" r="1.2" fill="#00ff7f" stroke="#063" stroke-width="0.5"/><circle cx="18.7" cy="16.6" r="2" fill="#00ff7f" stroke="#063" stroke-width="0.5"/></svg>
<div class="a" style="left:33.3px;top:688.5px;width:63.5px;height:27px;border:1.5px solid #b8b8b8;border-radius:4px;box-sizing:border-box;"></div><span class="t" style="top:692.7px;font-size:13.5px;color:#f2f2f2;left:43.35px;letter-spacing:-0.009px;">Dime...</span><div class="a" style="left:99.6px;top:688.5px;width:110.9px;height:27px;border:1.5px solid #5e5e5e;border-radius:4px;box-sizing:border-box;"></div><span class="t" style="top:692.7px;font-size:13.5px;color:#f2f2f2;left:115.10px;letter-spacing:-0.173px;">Info</span><span class="t" style="top:692.7px;font-size:13.5px;color:#f2f2f2;left:165.55px;letter-spacing:-0.403px;">Select</span>
<svg style="position:absolute;left:115px;top:718px" width="16" height="6" viewBox="0 0 16 6"><path d="M0.5 0.5 A2.4 2.4 0 0 1 0.5 5" fill="none" stroke="#5a5a5a" stroke-width="0.9"/><path d="M5.7 0.5 A2.4 2.4 0 0 1 5.7 5" fill="none" stroke="#5a5a5a" stroke-width="0.9"/><path d="M10.9 0.5 A2.4 2.4 0 0 1 10.9 5" fill="none" stroke="#5a5a5a" stroke-width="0.9"/></svg>
<span class="t" style="top:726px;font-size:13.5px;color:#fff;font-weight:700;-webkit-text-stroke:0.25px currentColor;left:86.05px;letter-spacing:-0.439px;">Modify</span><svg style="position:absolute;left:182.5px;top:727.6px" width="12" height="12" viewBox="0 0 12 12"><path d="M4.5 0.5 L4.5 4.5 L0.5 4.5 M7.5 0.5 L7.5 4.5 L11.5 4.5 M4.5 11.5 L4.5 7.5 L0.5 7.5 M7.5 11.5 L7.5 7.5 L11.5 7.5" fill="none" stroke="#e0e0e0" stroke-width="1.1"/></svg><svg style="position:absolute;left:199.5px;top:728.6px" width="9" height="9" viewBox="0 0 9 9"><line x1="1.5" y1="1.5" x2="7.5" y2="7.5" stroke="#e8e8e8" stroke-width="1.9"/><line x1="7.5" y1="1.5" x2="1.5" y2="7.5" stroke="#e8e8e8" stroke-width="1.9"/></svg>
<div class="a" style="left:34px;top:762px;width:32px;height:32px;background:#525252;border-radius:2px;"></div>
<svg style="position:absolute;left:38px;top:766px" width="24" height="24" viewBox="0 0 24 24"><path d="M3.3 5.1 L3.3 20.5 L12.3 20.5 Z" fill="none" stroke="#000" stroke-width="0.95"/><path d="M13.3 3.6 L21.9 18.8 L13.3 18.8 Z" fill="none" stroke="#000" stroke-width="0.95"/><line x1="7.3" y1="13.5" x2="12.4" y2="13.5" stroke="#00ff7f" stroke-width="1.7"/><path d="M11.4 11 L14.6 13.5 L11.4 16 Z" fill="#00ff7f"/></svg>
<div class="a" style="left:70px;top:762px;width:32px;height:32px;background:#525252;border-radius:2px;"></div>
<svg style="position:absolute;left:74px;top:766px" width="24" height="24" viewBox="0 0 24 24"><rect x="3.3" y="2.3" width="8.3" height="12.1" fill="none" stroke="#000" stroke-width="0.95"/><rect x="9.5" y="12.5" width="12.2" height="8" fill="none" stroke="#000" stroke-width="0.95"/><path d="M8.6 6.3 Q15.5 8 18.3 15.9" fill="none" stroke="#000" stroke-width="0.8"/><path d="M7.8 6.2 L10.2 5 L10 7.4 Z" fill="#000"/><rect x="4.4" y="16.6" width="3" height="3" fill="#00ff7f" stroke="#0a5" stroke-width="0.4" rx="0.7"/></svg>
<div class="a" style="left:106px;top:762px;width:32px;height:32px;background:#525252;border-radius:2px;"></div>
<svg style="position:absolute;left:110px;top:766px" width="24" height="24" viewBox="0 0 24 24"><rect x="5.3" y="9.5" width="8.4" height="11" fill="none" stroke="#000" stroke-width="1.05"/><path d="M5.3 5.3 L5.3 3.6 L18.5 3.6 L18.5 20.5 L16.6 20.5" fill="none" stroke="#000" stroke-width="0.95"/><path d="M11.8 4.4 L17.8 4.4 L17.8 9.7 Z" fill="#00ff7f"/></svg>
<div class="a" style="left:142px;top:762px;width:32px;height:32px;background:#525252;border-radius:2px;"></div>
<svg style="position:absolute;left:146px;top:766px" width="24" height="24" viewBox="0 0 24 24"><path d="M2.1 19.2 L10.3 19.2 L10.3 5.1 Z" fill="none" stroke="#000" stroke-width="0.95"/><path d="M13.6 5.1 L13.6 19.2 L22 19.2 Z" fill="none" stroke="#000" stroke-width="0.95"/><line x1="12" y1="1.5" x2="12" y2="21.6" stroke="#777" stroke-width="1" stroke-dasharray="3 1.4"/></svg>
<div class="a" style="left:178px;top:762px;width:32px;height:32px;background:#525252;border-radius:2px;"></div>
<svg style="position:absolute;left:182px;top:766px" width="24" height="24" viewBox="0 0 24 24"><path d="M17.6 5.2 A8.9 8.9 0 1 0 20.8 11.9" fill="none" stroke="#000" stroke-width="0.85"/><path d="M15.6 4.4 L18.6 4 L18 6.8 Z" fill="#000"/><circle cx="11.9" cy="12" r="1.2" fill="#00ff7f" stroke="#063" stroke-width="0.5"/><circle cx="11.9" cy="8.4" r="1.1" fill="#00ff7f" stroke="#063" stroke-width="0.5"/><circle cx="11.9" cy="15.6" r="1.1" fill="#00ff7f" stroke="#063" stroke-width="0.5"/><circle cx="8.3" cy="12" r="1.1" fill="#00ff7f" stroke="#063" stroke-width="0.5"/><circle cx="15.6" cy="12" r="1.1" fill="#00ff7f" stroke="#063" stroke-width="0.5"/></svg>
<div class="a" style="left:34px;top:812px;width:32px;height:32px;background:#525252;border-radius:2px;"></div>
<svg style="position:absolute;left:38px;top:816px" width="24" height="24" viewBox="0 0 24 24"><rect x="2.35" y="2.5" width="12.3" height="8.3" fill="none" stroke="#000" stroke-width="0.95"/><rect x="9.4" y="12.6" width="12.3" height="8.1" fill="none" stroke="#000" stroke-width="0.95"/><path d="M8.5 6.6 Q14.5 8 15.5 16.7" fill="none" stroke="#000" stroke-width="0.8"/><circle cx="8.5" cy="6.6" r="1.1" fill="#00ff7f" stroke="#063" stroke-width="0.5"/><circle cx="15.5" cy="16.7" r="1.1" fill="#00ff7f" stroke="#063" stroke-width="0.5"/><circle cx="5.9" cy="16.7" r="1.9" fill="#00ff7f" stroke="#063" stroke-width="0.5"/></svg>
<div class="a" style="left:70px;top:812px;width:32px;height:32px;background:#525252;border-radius:2px;"></div>
<svg style="position:absolute;left:74px;top:816px" width="24" height="24" viewBox="0 0 24 24"><line x1="5.7" y1="18.6" x2="18.5" y2="5.7" stroke="#000" stroke-width="0.85"/><circle cx="5.7" cy="18.6" r="2.3" fill="#00ff7f" stroke="#063" stroke-width="0.5"/><circle cx="18.5" cy="5.7" r="2.3" fill="#00ff7f" stroke="#063" stroke-width="0.5"/><line x1="6.2" y1="11.2" x2="9.7" y2="8.3" stroke="#000" stroke-width="0.9"/><path d="M5 12.2 L7.8 11.6 L6.4 9.8 Z" fill="#000"/><line x1="14.5" y1="15.7" x2="18" y2="12.6" stroke="#000" stroke-width="0.9"/><path d="M19.2 11.6 L16.6 12.2 L18 14 Z" fill="#000"/></svg>
<div class="a" style="left:106px;top:812px;width:32px;height:32px;background:#525252;border-radius:2px;"></div>
<svg style="position:absolute;left:110px;top:816px" width="24" height="24" viewBox="0 0 24 24"><line x1="3.9" y1="2.5" x2="20.8" y2="15.7" stroke="#000" stroke-width="0.85"/><line x1="3.6" y1="21.5" x2="12" y2="15" stroke="#000" stroke-width="0.85" stroke-dasharray="2.6 1.4"/><line x1="12" y1="15" x2="16" y2="11.9" stroke="#000" stroke-width="0.85"/><line x1="16" y1="11.9" x2="20.6" y2="8.3" stroke="#000" stroke-width="0.85" stroke-dasharray="1.6 1.4"/><circle cx="13.7" cy="14" r="1.4" fill="#00ff7f" stroke="#063" stroke-width="0.5"/></svg>
<div class="a" style="left:142px;top:812px;width:32px;height:32px;background:#525252;border-radius:2px;"></div>
<svg style="position:absolute;left:146px;top:816px" width="24" height="24" viewBox="0 0 24 24"><line x1="3.8" y1="2.5" x2="12.5" y2="9.2" stroke="#000" stroke-width="0.85" stroke-dasharray="3 1.4"/><line x1="12.5" y1="9.2" x2="15" y2="11.2" stroke="#000" stroke-width="0.85"/><line x1="15" y1="11.2" x2="20.9" y2="15.7" stroke="#000" stroke-width="0.85" stroke-dasharray="1.6 1.4"/><line x1="3.3" y1="21.5" x2="12.5" y2="14.6" stroke="#000" stroke-width="0.85" stroke-dasharray="3 1.4"/><line x1="12.5" y1="14.6" x2="15" y2="12.8" stroke="#000" stroke-width="0.85"/><line x1="15" y1="12.8" x2="21" y2="8.3" stroke="#000" stroke-width="0.85" stroke-dasharray="1.6 1.4"/><circle cx="13.9" cy="10.5" r="1.3" fill="#00ff7f" stroke="#063" stroke-width="0.5"/><circle cx="13.9" cy="14" r="1.3" fill="#00ff7f" stroke="#063" stroke-width="0.5"/></svg>
<div class="a" style="left:178px;top:812px;width:32px;height:32px;background:#525252;border-radius:2px;"></div>
<svg style="position:absolute;left:182px;top:816px" width="24" height="24" viewBox="0 0 24 24"><line x1="3.1" y1="19.1" x2="12.1" y2="12.6" stroke="#000" stroke-width="0.85"/><line x1="12.1" y1="12.6" x2="19.1" y2="7.1" stroke="#000" stroke-width="0.85" stroke-dasharray="1.8 1.4"/><circle cx="19.1" cy="7.1" r="1.6" fill="#00ff7f" stroke="#063" stroke-width="0.5"/><path d="M8.4 6 L11.6 7.4 M9.4 5.2 L11 8.6 L9.6 10.2" fill="none" stroke="#000" stroke-width="0.8"/></svg>
<div class="a" style="left:34px;top:862px;width:32px;height:32px;background:#525252;border-radius:2px;"></div>
<svg style="position:absolute;left:38px;top:866px" width="24" height="24" viewBox="0 0 24 24"><path d="M3.3 3.5 A17.4 17.4 0 0 1 20.7 20.9" fill="none" stroke="#2b1515" stroke-width="0.85"/><path d="M3.3 6.3 A14.6 14.6 0 0 1 17.9 20.9" fill="none" stroke="#2b1515" stroke-width="0.9" stroke-dasharray="2.6 1.5"/><path d="M3.3 9.2 A11.7 11.7 0 0 1 15 20.9" fill="none" stroke="#2b1515" stroke-width="0.85"/></svg>
<div class="a" style="left:70px;top:862px;width:32px;height:32px;background:#525252;border-radius:2px;"></div>
<svg style="position:absolute;left:74px;top:866px" width="24" height="24" viewBox="0 0 24 24"><path d="M7.8 3.4 L3.3 3.4 L3.3 20.7 L20.7 20.7 L20.7 15.9" fill="none" stroke="#000" stroke-width="0.95"/><path d="M7.8 3.4 L20.7 3.4 L20.7 15.9" fill="none" stroke="#000" stroke-width="1" stroke-dasharray="1 1.5"/><line x1="6.8" y1="1.3" x2="22.9" y2="16.8" stroke="#000" stroke-width="0.7"/><line x1="7.8" y1="4.6" x2="19.3" y2="15.9" stroke="#00ff7f" stroke-width="2.8"/></svg>
<div class="a" style="left:106px;top:862px;width:32px;height:32px;background:#525252;border-radius:2px;"></div>
<svg style="position:absolute;left:110px;top:866px" width="24" height="24" viewBox="0 0 24 24"><path d="M9.1 3.4 L3.2 3.4 L3.2 20.7 L20.6 20.7 L20.6 15.1" fill="none" stroke="#000" stroke-width="0.95"/><path d="M9.1 3.4 L20.6 3.4 L20.6 15.1" fill="none" stroke="#000" stroke-width="1" stroke-dasharray="1 1.5"/><path d="M9.1 5.3 A9.8 9.8 0 0 1 18.9 15.1" fill="none" stroke="#00ff7f" stroke-width="2.8"/><circle cx="9.1" cy="15.1" r="1.3" fill="#000"/></svg>
<div class="a" style="left:142px;top:862px;width:32px;height:32px;background:#525252;border-radius:2px;"></div>
<svg style="position:absolute;left:146px;top:866px" width="24" height="24" viewBox="0 0 24 24"><rect x="3.3" y="4.2" width="16.8" height="16.3" fill="none" stroke="#000" stroke-width="1" stroke-dasharray="3 1.6 1 1.6"/><line x1="3.3" y1="12.5" x2="11.5" y2="20.5" stroke="#000" stroke-width="1"/><path d="M5.9 13.8 L20.6 6.5 L19.9 8.2 Q16 12 11.5 14 Z" fill="#00ff7f" stroke="#111" stroke-width="0.5"/></svg>
<div class="a" style="left:178px;top:862px;width:32px;height:32px;background:#525252;border-radius:2px;"></div>
<svg style="position:absolute;left:182px;top:866px" width="24" height="24" viewBox="0 0 24 24"><path d="M13.1 3.4 L3.3 3.4 L3.3 20.7 L13.1 20.7 Z" fill="none" stroke="#000" stroke-width="0.95"/><path d="M13.1 3.4 L20.5 3.4 L20.5 20.7 L13.1 20.7" fill="none" stroke="#000" stroke-width="1" stroke-dasharray="2 1.6"/><line x1="7.6" y1="12.5" x2="14" y2="12.5" stroke="#00ff7f" stroke-width="2.9"/><path d="M13.1 9.1 L18.1 12.5 L13.1 15.9 Z" fill="#00ff7f"/></svg>
<div class="a" style="left:34px;top:912px;width:32px;height:32px;background:#525252;border-radius:2px;"></div>
<svg style="position:absolute;left:38px;top:916px" width="24" height="24" viewBox="0 0 24 24"><rect x="4.6" y="5" width="14.6" height="14" fill="#fff" stroke="#262626" stroke-width="2.6"/><circle cx="9.1" cy="15.1" r="2.3" fill="#fff" stroke="#000" stroke-width="0.9"/><circle cx="4.2" cy="4" r="2.2" fill="#00ff7f" stroke="#063" stroke-width="0.5"/><circle cx="20" cy="4" r="2.2" fill="#00ff7f" stroke="#063" stroke-width="0.5"/><circle cx="4.2" cy="19.9" r="2.2" fill="#00ff7f" stroke="#063" stroke-width="0.5"/><circle cx="20" cy="19.9" r="2.2" fill="#00ff7f" stroke="#063" stroke-width="0.5"/></svg>
<div class="a" style="left:70px;top:912px;width:32px;height:32px;background:#525252;border-radius:2px;"></div>
<svg style="position:absolute;left:74px;top:916px" width="24" height="24" viewBox="0 0 24 24"><path d="M14.3 2.8 L19.75 7.9 L10.8 16.7 L5.2 17.2 L5.2 13.3 Z" fill="#00ff7f" stroke="#111" stroke-width="0.5"/><path d="M5.1 17.9 Q8 18.6 11.6 21.5" fill="none" stroke="#000" stroke-width="0.9"/></svg>
<div class="a" style="left:106px;top:912px;width:32px;height:32px;background:#525252;border-radius:2px;"></div>
<svg style="position:absolute;left:110px;top:916px" width="24" height="24" viewBox="0 0 24 24"><text x="5.6" y="14.8" font-family="Liberation Sans, sans-serif" font-size="9" fill="#0a0a0a" font-weight="normal" text-anchor="middle">a</text><text x="12.8" y="14.8" font-family="Liberation Sans, sans-serif" font-size="9" fill="#0a0a0a" font-weight="normal" text-anchor="middle">b</text><text x="20.4" y="14.8" font-family="Liberation Sans, sans-serif" font-size="9" fill="#0a0a0a" font-weight="normal" text-anchor="middle">c</text><line x1="8.4" y1="6.2" x2="8.4" y2="17.7" stroke="#000" stroke-width="0.8" stroke-dasharray="1 1.1"/><line x1="16.1" y1="6.2" x2="16.1" y2="17.7" stroke="#000" stroke-width="0.8" stroke-dasharray="1 1.1"/><circle cx="3" cy="15.1" r="1.1" fill="#0a7a3a"/><circle cx="10.6" cy="15.1" r="1.1" fill="#0a7a3a"/><circle cx="18" cy="15.1" r="1.1" fill="#0a7a3a"/></svg>
<div class="a" style="left:142px;top:912px;width:32px;height:32px;background:#525252;border-radius:2px;"></div>
<svg style="position:absolute;left:146px;top:916px" width="24" height="24" viewBox="0 0 24 24"><rect x="5.2" y="5.7" width="13.5" height="13.1" fill="none" stroke="#000" stroke-width="1.05"/><rect x="2.8" y="3.3" width="4.8" height="4.8" fill="#00ff7f"/><line x1="3.2" y1="3.7" x2="7.2" y2="7.7" stroke="#063" stroke-width="0.8"/><line x1="3.2" y1="7.7" x2="7.2" y2="3.7" stroke="#063" stroke-width="0.8"/><rect x="16.3" y="3.3" width="4.8" height="4.8" fill="#00ff7f"/><line x1="16.7" y1="3.7" x2="20.7" y2="7.7" stroke="#063" stroke-width="0.8"/><line x1="16.7" y1="7.7" x2="20.7" y2="3.7" stroke="#063" stroke-width="0.8"/><rect x="2.8" y="16.4" width="4.8" height="4.8" fill="#00ff7f"/><line x1="3.2" y1="16.8" x2="7.2" y2="20.8" stroke="#063" stroke-width="0.8"/><line x1="3.2" y1="20.8" x2="7.2" y2="16.8" stroke="#063" stroke-width="0.8"/><rect x="16.3" y="16.4" width="4.8" height="4.8" fill="#00ff7f"/><line x1="16.7" y1="16.8" x2="20.7" y2="20.8" stroke="#063" stroke-width="0.8"/><line x1="16.7" y1="20.8" x2="20.7" y2="16.8" stroke="#063" stroke-width="0.8"/></svg>
<div class="a" style="left:178px;top:912px;width:32px;height:32px;background:#525252;border-radius:2px;"></div>
<svg style="position:absolute;left:182px;top:916px" width="24" height="24" viewBox="0 0 24 24"><rect x="3.3" y="3.8" width="17.2" height="16.5" fill="none" stroke="#000" stroke-width="1" stroke-dasharray="1.6 1.4"/><line x1="3.3" y1="12.1" x2="11.4" y2="20.3" stroke="#000" stroke-width="1"/><line x1="9.2" y1="7.9" x2="16.5" y2="15" stroke="#00ff7f" stroke-width="1.6"/><line x1="16.5" y1="7.9" x2="9.2" y2="15" stroke="#00ff7f" stroke-width="1.6"/></svg>
<svg style="position:absolute;left:213px;top:534px" width="6" height="16" viewBox="0 0 6 16"><path d="M0.5 0.5 A2.4 2.4 0 0 0 5 0.5" fill="none" stroke="#5a5a5a" stroke-width="0.9"/><path d="M0.5 5.7 A2.4 2.4 0 0 0 5 5.7" fill="none" stroke="#5a5a5a" stroke-width="0.9"/><path d="M0.5 10.9 A2.4 2.4 0 0 0 5 10.9" fill="none" stroke="#5a5a5a" stroke-width="0.9"/></svg>
<svg style="position:absolute;left:1650px;top:534px" width="6" height="16" viewBox="0 0 6 16"><path d="M5 0.5 A2.4 2.4 0 0 1 0.5 0.5" fill="none" stroke="#5a5a5a" stroke-width="0.9"/><path d="M5 5.7 A2.4 2.4 0 0 1 0.5 5.7" fill="none" stroke="#5a5a5a" stroke-width="0.9"/><path d="M5 10.9 A2.4 2.4 0 0 1 0.5 10.9" fill="none" stroke="#5a5a5a" stroke-width="0.9"/></svg>
<svg style="position:absolute;left:223px;top:124px" width="1407" height="817" viewBox="0 0 1407 817" shape-rendering="crispEdges"><rect x="0" y="0" width="1407" height="817" fill="#000"/><line x1="293" y1="807.5" x2="333" y2="807.5" stroke="#ff0000" stroke-width="1"/><line x1="313.5" y1="787" x2="313.5" y2="817" stroke="#ff0000" stroke-width="1"/><rect x="313" y="10" width="780" height="797" fill="none" stroke="#ff0000" stroke-width="2"/><rect x="486" y="460" width="174" height="18" fill="none" stroke="#ff0000" stroke-width="2"/><rect x="486" y="530" width="174" height="17" fill="none" stroke="#ff0000" stroke-width="2"/><rect x="789" y="114" width="260" height="390" fill="none" stroke="#0000ff" stroke-width="2"/><circle cx="573" cy="374" r="173" fill="none" stroke="#0000ff" stroke-width="2"/><path d="M568 151 H1171 A15 15 0 0 1 1186 166 V613 A15 15 0 0 1 1171 628 H640 V899 A15 15 0 0 1 625 914 H568 A15 15 0 0 1 553 899 V166 A15 15 0 0 1 568 151 Z" fill="none" stroke="#00ff00" stroke-width="2" transform="translate(-223 -124)"/><path d="M664 636 H1283 A15 15 0 0 1 1298 651 V899 A15 15 0 0 1 1283 914 H1227 A15 15 0 0 1 1212 899 V833 A15 15 0 0 0 1197 818 H664 A15 15 0 0 1 649 803 V651 A15 15 0 0 1 664 636 Z" fill="none" stroke="#00ff00" stroke-width="2" transform="translate(-223 -124)"/><rect x="426" y="703" width="554" height="87" rx="15" fill="none" stroke="#00ff00" stroke-width="2"/><circle cx="919.5" cy="70.5" r="5.6" fill="none" stroke="#fff" stroke-width="2"/><circle cx="919.5" cy="547" r="5.6" fill="none" stroke="#fff" stroke-width="2"/><circle cx="373.5" cy="634" r="5.6" fill="none" stroke="#fff" stroke-width="2"/><circle cx="893.5" cy="634" r="5.6" fill="none" stroke="#fff" stroke-width="2"/><circle cx="373.5" cy="746.5" r="5.6" fill="none" stroke="#fff" stroke-width="2"/><circle cx="468.5" cy="746.5" r="5.6" fill="none" stroke="#fff" stroke-width="2"/><circle cx="937" cy="746.5" r="5.6" fill="none" stroke="#fff" stroke-width="2"/><circle cx="1032" cy="746.5" r="5.6" fill="none" stroke="#fff" stroke-width="2"/></svg>
<span class="t" style="top:122px;font-size:13.5px;color:#fff;font-weight:700;-webkit-text-stroke:0.25px currentColor;left:1744.80px;letter-spacing:-0.708px;">Layer List</span>
<svg style="position:absolute;left:1890.5px;top:123.6px" width="12" height="12" viewBox="0 0 12 12"><path d="M4.5 0.5 L4.5 4.5 L0.5 4.5 M7.5 0.5 L7.5 4.5 L11.5 4.5 M4.5 11.5 L4.5 7.5 L0.5 7.5 M7.5 11.5 L7.5 7.5 L11.5 7.5" fill="none" stroke="#e0e0e0" stroke-width="1.1"/></svg>
<svg style="position:absolute;left:1907.5px;top:124.6px" width="9" height="9" viewBox="0 0 9 9"><line x1="1.5" y1="1.5" x2="7.5" y2="7.5" stroke="#e8e8e8" stroke-width="1.9"/><line x1="7.5" y1="1.5" x2="1.5" y2="7.5" stroke="#e8e8e8" stroke-width="1.9"/></svg>
<div class="a" style="left:1659px;top:144px;width:258px;height:26px;background:#282828;border-radius:3px;border:1px solid #333;border-top-color:#222;border-bottom-color:#4c4c4c;box-sizing:border-box;"></div>
<div class="a" style="left:1678px;top:173px;width:26px;height:26px;background:#525252;border-radius:2px;"></div>
<svg style="position:absolute;left:1683px;top:178px" width="16" height="16" viewBox="0 0 16 16"><path d="M1.6 8 Q8 2.2 14.4 8 Q8 13.8 1.6 8 Z" fill="#000"/><ellipse cx="8" cy="8" rx="3.6" ry="3.1" fill="#00ff7f"/><circle cx="8" cy="8" r="1.7" fill="#000"/><circle cx="7.3" cy="7.3" r="0.8" fill="#fff"/></svg>
<div class="a" style="left:1726px;top:173px;width:26px;height:26px;background:#4e4e4e;border-radius:2px;"></div>
<svg style="position:absolute;left:1731px;top:178px" width="16" height="16" viewBox="0 0 16 16"><path d="M1.6 8 Q8 2.2 14.4 8 Q8 13.8 1.6 8 Z" fill="#6a6a6a"/><ellipse cx="8" cy="8" rx="3.4" ry="3" fill="#858585"/><circle cx="8" cy="8" r="1.6" fill="#6a6a6a"/></svg>
<div class="a" style="left:1774px;top:173px;width:26px;height:26px;background:#525252;border-radius:2px;"></div>
<svg style="position:absolute;left:1779px;top:178px" width="16" height="16" viewBox="0 0 16 16"><line x1="3.8" y1="8" x2="12.2" y2="8" stroke="#00ff7f" stroke-width="3.3" stroke-linecap="round"/><line x1="8" y1="3.8" x2="8" y2="12.2" stroke="#00ff7f" stroke-width="3.3" stroke-linecap="round"/></svg>
<div class="a" style="left:1822px;top:173px;width:26px;height:26px;background:#525252;border-radius:2px;"></div>
<svg style="position:absolute;left:1827px;top:178px" width="16" height="16" viewBox="0 0 16 16"><line x1="3.8" y1="8" x2="12.2" y2="8" stroke="#00ff7f" stroke-width="3.3" stroke-linecap="round"/></svg>
<div class="a" style="left:1870px;top:173px;width:26px;height:26px;background:#525252;border-radius:2px;"></div>
<svg style="position:absolute;left:1875px;top:178px" width="16" height="16" viewBox="0 0 16 16"><path d="M9.6 2.4 L13 5.6 L6.4 12.6 L3 12.6 L3 9.2 Z" fill="#00ff7f" stroke="#063" stroke-width="0.4"/><line x1="9.6" y1="6.4" x2="14" y2="11" stroke="#222" stroke-width="1.6"/><line x1="10" y1="6.4" x2="13.6" y2="10.2" stroke="#ccc" stroke-width="0.5"/><line x1="2.6" y1="13.2" x2="6.4" y2="14.6" stroke="#111" stroke-width="0.8"/></svg>
<div class="a" style="left:1660px;top:203px;width:257px;height:725px;background:#282828;border:1.5px solid #505050;border-radius:4px;box-sizing:border-box;box-shadow:0 0 0 1px #303030;"></div>
<svg style="position:absolute;left:1666px;top:209px" width="16" height="16" viewBox="0 0 16 16"><path d="M1.6 8 Q8 2.2 14.4 8 Q8 13.8 1.6 8 Z" fill="#000"/><ellipse cx="8" cy="8" rx="3.6" ry="3.1" fill="#00ff7f"/><circle cx="8" cy="8" r="1.7" fill="#000"/><circle cx="7.3" cy="7.3" r="0.8" fill="#fff"/></svg>
<svg style="position:absolute;left:1690px;top:209px" width="16" height="16" viewBox="0 0 16 16"><rect x="3.2" y="7" width="9.6" height="7.2" fill="#c8c8c8" rx="0.4"/><path d="M5 7 L5 5.2 A3 3 0 0 1 11 5.2 L11 7" fill="none" stroke="#c8c8c8" stroke-width="1.1"/></svg>
<svg style="position:absolute;left:1714px;top:209px" width="16" height="16" viewBox="0 0 16 16"><rect x="5.6" y="1.4" width="4.8" height="4" fill="#00ff7f"/><rect x="2.6" y="5.4" width="10.8" height="6" fill="#000" rx="0.8"/><rect x="5" y="7" width="6" height="2" fill="#fff"/><path d="M5 10.4 L11 10.4 L12.2 14 L3.8 14 Z" fill="#00ff7f"/></svg>
<svg style="position:absolute;left:1738px;top:209px" width="16" height="16" viewBox="0 0 16 16"><line x1="5.6" y1="2.4" x2="5.6" y2="13.6" stroke="#b0b0b0" stroke-width="1.4"/><line x1="10.4" y1="2.4" x2="10.4" y2="13.6" stroke="#b0b0b0" stroke-width="1.4"/><line x1="2.4" y1="5.8" x2="13.6" y2="5.8" stroke="#b0b0b0" stroke-width="1.4"/><line x1="2.4" y1="10.4" x2="13.6" y2="10.4" stroke="#b0b0b0" stroke-width="1.4"/></svg>
<div class="a" style="left:1762px;top:209px;width:16px;height:16px;background:#000;"></div>
<span class="t" style="top:207.8px;font-size:13.5px;color:#f5f5f5;left:1786.50px;">0</span>
<div class="a" style="left:1663px;top:229px;width:250px;height:1px;background:#3c3c3c;"></div>
<svg style="position:absolute;left:1666px;top:233px" width="16" height="16" viewBox="0 0 16 16"><path d="M1.6 8 Q8 2.2 14.4 8 Q8 13.8 1.6 8 Z" fill="#000"/><ellipse cx="8" cy="8" rx="3.6" ry="3.1" fill="#00ff7f"/><circle cx="8" cy="8" r="1.7" fill="#000"/><circle cx="7.3" cy="7.3" r="0.8" fill="#fff"/></svg>
<svg style="position:absolute;left:1690px;top:233px" width="16" height="16" viewBox="0 0 16 16"><rect x="3.2" y="7" width="9.6" height="7.2" fill="#c8c8c8" rx="0.4"/><path d="M5 7 L5 5.2 A3 3 0 0 1 11 5.2 L11 7" fill="none" stroke="#c8c8c8" stroke-width="1.1"/></svg>
<svg style="position:absolute;left:1714px;top:233px" width="16" height="16" viewBox="0 0 16 16"><rect x="5.6" y="1.4" width="4.8" height="4" fill="#00ff7f"/><rect x="2.6" y="5.4" width="10.8" height="6" fill="#000" rx="0.8"/><rect x="5" y="7" width="6" height="2" fill="#fff"/><path d="M5 10.4 L11 10.4 L12.2 14 L3.8 14 Z" fill="#00ff7f"/></svg>
<svg style="position:absolute;left:1738px;top:233px" width="16" height="16" viewBox="0 0 16 16"><line x1="5.6" y1="2.4" x2="5.6" y2="13.6" stroke="#b0b0b0" stroke-width="1.4"/><line x1="10.4" y1="2.4" x2="10.4" y2="13.6" stroke="#b0b0b0" stroke-width="1.4"/><line x1="2.4" y1="5.8" x2="13.6" y2="5.8" stroke="#b0b0b0" stroke-width="1.4"/><line x1="2.4" y1="10.4" x2="13.6" y2="10.4" stroke="#b0b0b0" stroke-width="1.4"/></svg>
<div class="a" style="left:1762px;top:233px;width:16px;height:16px;background:#ff0000;"></div>
<span class="t" style="top:231.8px;font-size:13.5px;color:#f5f5f5;left:1786.50px;letter-spacing:-0.869px;">layer 1</span>
<div class="a" style="left:1663px;top:253px;width:250px;height:1px;background:#3c3c3c;"></div>
<div class="a" style="left:1783px;top:253.5px;width:130px;height:23px;background:#5a998c;"></div>
<svg style="position:absolute;left:1666px;top:257px" width="16" height="16" viewBox="0 0 16 16"><path d="M1.6 8 Q8 2.2 14.4 8 Q8 13.8 1.6 8 Z" fill="#000"/><ellipse cx="8" cy="8" rx="3.6" ry="3.1" fill="#00ff7f"/><circle cx="8" cy="8" r="1.7" fill="#000"/><circle cx="7.3" cy="7.3" r="0.8" fill="#fff"/></svg>
<svg style="position:absolute;left:1690px;top:257px" width="16" height="16" viewBox="0 0 16 16"><rect x="3.2" y="7" width="9.6" height="7.2" fill="#c8c8c8" rx="0.4"/><path d="M5 7 L5 5.2 A3 3 0 0 1 11 5.2 L11 7" fill="none" stroke="#c8c8c8" stroke-width="1.1"/></svg>
<svg style="position:absolute;left:1714px;top:257px" width="16" height="16" viewBox="0 0 16 16"><rect x="5.6" y="1.4" width="4.8" height="4" fill="#00ff7f"/><rect x="2.6" y="5.4" width="10.8" height="6" fill="#000" rx="0.8"/><rect x="5" y="7" width="6" height="2" fill="#fff"/><path d="M5 10.4 L11 10.4 L12.2 14 L3.8 14 Z" fill="#00ff7f"/></svg>
<svg style="position:absolute;left:1738px;top:257px" width="16" height="16" viewBox="0 0 16 16"><line x1="5.6" y1="2.4" x2="5.6" y2="13.6" stroke="#b0b0b0" stroke-width="1.4"/><line x1="10.4" y1="2.4" x2="10.4" y2="13.6" stroke="#b0b0b0" stroke-width="1.4"/><line x1="2.4" y1="5.8" x2="13.6" y2="5.8" stroke="#b0b0b0" stroke-width="1.4"/><line x1="2.4" y1="10.4" x2="13.6" y2="10.4" stroke="#b0b0b0" stroke-width="1.4"/></svg>
<div class="a" style="left:1762px;top:257px;width:16px;height:16px;background:#00ff00;"></div>
<span class="t" style="top:255.8px;font-size:13.5px;color:#f5f5f5;left:1786.50px;letter-spacing:-0.552px;">layer 2</span>
<div class="a" style="left:1663px;top:277px;width:250px;height:1px;background:#3c3c3c;"></div>
<svg style="position:absolute;left:1666px;top:281px" width="16" height="16" viewBox="0 0 16 16"><path d="M1.6 8 Q8 2.2 14.4 8 Q8 13.8 1.6 8 Z" fill="#000"/><ellipse cx="8" cy="8" rx="3.6" ry="3.1" fill="#00ff7f"/><circle cx="8" cy="8" r="1.7" fill="#000"/><circle cx="7.3" cy="7.3" r="0.8" fill="#fff"/></svg>
<svg style="position:absolute;left:1690px;top:281px" width="16" height="16" viewBox="0 0 16 16"><rect x="3.2" y="7" width="9.6" height="7.2" fill="#c8c8c8" rx="0.4"/><path d="M5 7 L5 5.2 A3 3 0 0 1 11 5.2 L11 7" fill="none" stroke="#c8c8c8" stroke-width="1.1"/></svg>
<svg style="position:absolute;left:1714px;top:281px" width="16" height="16" viewBox="0 0 16 16"><rect x="5.6" y="1.4" width="4.8" height="4" fill="#00ff7f"/><rect x="2.6" y="5.4" width="10.8" height="6" fill="#000" rx="0.8"/><rect x="5" y="7" width="6" height="2" fill="#fff"/><path d="M5 10.4 L11 10.4 L12.2 14 L3.8 14 Z" fill="#00ff7f"/></svg>
<svg style="position:absolute;left:1738px;top:281px" width="16" height="16" viewBox="0 0 16 16"><line x1="5.6" y1="2.4" x2="5.6" y2="13.6" stroke="#b0b0b0" stroke-width="1.4"/><line x1="10.4" y1="2.4" x2="10.4" y2="13.6" stroke="#b0b0b0" stroke-width="1.4"/><line x1="2.4" y1="5.8" x2="13.6" y2="5.8" stroke="#b0b0b0" stroke-width="1.4"/><line x1="2.4" y1="10.4" x2="13.6" y2="10.4" stroke="#b0b0b0" stroke-width="1.4"/></svg>
<div class="a" style="left:1762px;top:281px;width:16px;height:16px;background:#0000ff;"></div>
<span class="t" style="top:279.8px;font-size:13.5px;color:#f5f5f5;left:1786.50px;letter-spacing:-0.552px;">layer 3</span>
<div class="a" style="left:1663px;top:301px;width:250px;height:1px;background:#3c3c3c;"></div>
<div class="a" style="left:1686px;top:205px;width:1px;height:97px;background:#3c3c3c;"></div>
<div class="a" style="left:1710px;top:205px;width:1px;height:97px;background:#3c3c3c;"></div>
<div class="a" style="left:1734px;top:205px;width:1px;height:97px;background:#3c3c3c;"></div>
<div class="a" style="left:1758px;top:205px;width:1px;height:97px;background:#3c3c3c;"></div>
<div class="a" style="left:1782px;top:205px;width:1px;height:97px;background:#3c3c3c;"></div>
<div class="a" style="left:1659.6px;top:932.7px;width:182.8px;height:27px;border:1.5px solid #5e5e5e;border-radius:4px;box-sizing:border-box;"></div><span class="t" style="top:936.9px;font-size:13.5px;color:#f2f2f2;left:1667.95px;letter-spacing:-0.273px;">Library Browser</span><span class="t" style="top:936.9px;font-size:13.5px;color:#f2f2f2;left:1779.10px;letter-spacing:-0.352px;">Block List</span><div class="a" style="left:1845.2px;top:932.7px;width:72.4px;height:27px;border:1.5px solid #b8b8b8;border-radius:4px;box-sizing:border-box;"></div><span class="t" style="top:936.9px;font-size:13.5px;color:#f2f2f2;left:1854.45px;letter-spacing:-0.514px;">Layer List</span>
<div class="a" style="left:6px;top:966px;width:2px;height:22px;background:#5c5c5c;border-radius:1px;"></div>
<svg style="position:absolute;left:16px;top:969px" width="16" height="16" viewBox="0 0 24 24"><circle cx="11.9" cy="11.9" r="8.7" fill="none" stroke="#000" stroke-width="0.85"/><rect x="10.4" y="10.4" width="3" height="3" fill="#00ff7f" stroke="#0a5" stroke-width="0.4" rx="0.7"/><rect x="10.4" y="1.8" width="3" height="3" fill="#00ff7f" stroke="#0a5" stroke-width="0.4" rx="0.7"/></svg>
<svg style="position:absolute;left:42px;top:969px" width="16" height="16" viewBox="0 0 24 24"><circle cx="12.1" cy="11.9" r="8.7" fill="none" stroke="#000" stroke-width="0.85"/><rect x="4.35" y="4.55" width="3" height="3" fill="#00ff7f" stroke="#0a5" stroke-width="0.4" rx="0.7"/><rect x="16.6" y="16.6" width="3" height="3" fill="#00ff7f" stroke="#0a5" stroke-width="0.4" rx="0.7"/></svg>
<svg style="position:absolute;left:68px;top:969px" width="16" height="16" viewBox="0 0 24 24"><path d="M15.2 3.5 A8.7 8.7 0 1 0 20.4 9.4" fill="none" stroke="#000" stroke-width="1"/><path d="M15.2 3.9 L12 11.8 L20 8.5" fill="none" stroke="#000" stroke-width="0.9"/><rect x="13.7" y="2.4" width="3" height="3" fill="#00ff7f" stroke="#0a5" stroke-width="0.4" rx="0.7"/><rect x="18.5" y="7" width="3" height="3" fill="#00ff7f" stroke="#0a5" stroke-width="0.4" rx="0.7"/></svg>
<svg style="position:absolute;left:94px;top:969px" width="16" height="16" viewBox="0 0 24 24"><circle cx="12" cy="11.9" r="8.7" fill="none" stroke="#000" stroke-width="0.85"/><rect x="16.5" y="4.55" width="3" height="3" fill="#00ff7f" stroke="#0a5" stroke-width="0.4" rx="0.7"/><rect x="4.4" y="16.6" width="3" height="3" fill="#00ff7f" stroke="#0a5" stroke-width="0.4" rx="0.7"/><rect x="16.5" y="16.6" width="3" height="3" fill="#00ff7f" stroke="#0a5" stroke-width="0.4" rx="0.7"/></svg>
<svg style="position:absolute;left:120px;top:969px" width="16" height="16" viewBox="0 0 24 24"><circle cx="11.9" cy="11.9" r="8.7" fill="none" stroke="#000" stroke-width="0.85"/><line x1="6" y1="6.05" x2="11.9" y2="11.9" stroke="#000" stroke-width="0.85"/><rect x="4.5" y="4.55" width="3" height="3" fill="#00ff7f" stroke="#0a5" stroke-width="0.4" rx="0.7"/><rect x="10.4" y="10.4" width="3" height="3" fill="#00ff7f" stroke="#0a5" stroke-width="0.4" rx="0.7"/></svg>
<svg style="position:absolute;left:146px;top:969px" width="16" height="16" viewBox="0 0 24 24"><circle cx="7.6" cy="13.3" r="3.85" fill="none" stroke="#000" stroke-width="0.85"/><circle cx="14.8" cy="8.75" r="3.85" fill="none" stroke="#000" stroke-width="0.85"/><circle cx="14.8" cy="16.4" r="3.85" fill="none" stroke="#000" stroke-width="0.85"/><circle cx="14.6" cy="4.8" r="1.4" fill="#00ff7f" stroke="#063" stroke-width="0.5"/></svg>
<svg style="position:absolute;left:172px;top:969px" width="16" height="16" viewBox="0 0 24 24"><circle cx="7.8" cy="15.5" r="5.65" fill="none" stroke="#000" stroke-width="0.85"/><circle cx="16.2" cy="8.5" r="5.65" fill="none" stroke="#000" stroke-width="0.85"/><rect x="13.5" y="2.4" width="3" height="3" fill="#00ff7f" stroke="#0a5" stroke-width="0.4" rx="0.7"/><rect x="19.7" y="9.2" width="3" height="3" fill="#00ff7f" stroke="#0a5" stroke-width="0.4" rx="0.7"/></svg>
<svg style="position:absolute;left:198px;top:969px" width="16" height="16" viewBox="0 0 24 24"><circle cx="7.7" cy="13.1" r="3.85" fill="none" stroke="#000" stroke-width="0.85"/><circle cx="14.9" cy="8.75" r="3.85" fill="none" stroke="#000" stroke-width="0.85"/><circle cx="14.9" cy="16.4" r="3.85" fill="none" stroke="#000" stroke-width="0.85"/><circle cx="14.7" cy="8.75" r="2.3" fill="none" stroke="#000" stroke-width="0.7"/><circle cx="14.7" cy="8.75" r="1.2" fill="#00ff7f" stroke="#063" stroke-width="0.5"/></svg>
<svg style="position:absolute;left:224px;top:969px" width="16" height="16" viewBox="0 0 24 24"><circle cx="5.9" cy="16.1" r="3.85" fill="none" stroke="#000" stroke-width="0.85"/><circle cx="17" cy="16.1" r="3.85" fill="none" stroke="#000" stroke-width="0.85"/><circle cx="18" cy="6.3" r="3.85" fill="none" stroke="#000" stroke-width="0.85"/><circle cx="11.7" cy="11.1" r="3.85" fill="none" stroke="#000" stroke-width="0.85"/><circle cx="11.7" cy="11.1" r="2.3" fill="none" stroke="#000" stroke-width="0.7"/><circle cx="11.6" cy="11.1" r="1.2" fill="#00ff7f" stroke="#063" stroke-width="0.5"/></svg>
<div class="a" style="left:254px;top:966px;width:2px;height:22px;background:#5c5c5c;border-radius:1px;"></div>
<svg style="position:absolute;left:264px;top:969px" width="16" height="16" viewBox="0 0 24 24"><path d="M3.3 5.1 L3.3 20.5 L12.3 20.5 Z" fill="none" stroke="#000" stroke-width="0.95"/><path d="M13.3 3.6 L21.9 18.8 L13.3 18.8 Z" fill="none" stroke="#000" stroke-width="0.95"/><line x1="7.3" y1="13.5" x2="12.4" y2="13.5" stroke="#00ff7f" stroke-width="1.7"/><path d="M11.4 11 L14.6 13.5 L11.4 16 Z" fill="#00ff7f"/></svg>
<svg style="position:absolute;left:290px;top:969px" width="16" height="16" viewBox="0 0 24 24"><rect x="3.3" y="2.3" width="8.3" height="12.1" fill="none" stroke="#000" stroke-width="0.95"/><rect x="9.5" y="12.5" width="12.2" height="8" fill="none" stroke="#000" stroke-width="0.95"/><path d="M8.6 6.3 Q15.5 8 18.3 15.9" fill="none" stroke="#000" stroke-width="0.8"/><path d="M7.8 6.2 L10.2 5 L10 7.4 Z" fill="#000"/><rect x="4.4" y="16.6" width="3" height="3" fill="#00ff7f" stroke="#0a5" stroke-width="0.4" rx="0.7"/></svg>
<svg style="position:absolute;left:316px;top:969px" width="16" height="16" viewBox="0 0 24 24"><rect x="5.3" y="9.5" width="8.4" height="11" fill="none" stroke="#000" stroke-width="1.05"/><path d="M5.3 5.3 L5.3 3.6 L18.5 3.6 L18.5 20.5 L16.6 20.5" fill="none" stroke="#000" stroke-width="0.95"/><path d="M11.8 4.4 L17.8 4.4 L17.8 9.7 Z" fill="#00ff7f"/></svg>
<svg style="position:absolute;left:342px;top:969px" width="16" height="16" viewBox="0 0 24 24"><path d="M2.1 19.2 L10.3 19.2 L10.3 5.1 Z" fill="none" stroke="#000" stroke-width="0.95"/><path d="M13.6 5.1 L13.6 19.2 L22 19.2 Z" fill="none" stroke="#000" stroke-width="0.95"/><line x1="12" y1="1.5" x2="12" y2="21.6" stroke="#777" stroke-width="1" stroke-dasharray="3 1.4"/></svg>
<svg style="position:absolute;left:368px;top:969px" width="16" height="16" viewBox="0 0 24 24"><path d="M17.6 5.2 A8.9 8.9 0 1 0 20.8 11.9" fill="none" stroke="#000" stroke-width="0.85"/><path d="M15.6 4.4 L18.6 4 L18 6.8 Z" fill="#000"/><circle cx="11.9" cy="12" r="1.2" fill="#00ff7f" stroke="#063" stroke-width="0.5"/><circle cx="11.9" cy="8.4" r="1.1" fill="#00ff7f" stroke="#063" stroke-width="0.5"/><circle cx="11.9" cy="15.6" r="1.1" fill="#00ff7f" stroke="#063" stroke-width="0.5"/><circle cx="8.3" cy="12" r="1.1" fill="#00ff7f" stroke="#063" stroke-width="0.5"/><circle cx="15.6" cy="12" r="1.1" fill="#00ff7f" stroke="#063" stroke-width="0.5"/></svg>
<svg style="position:absolute;left:394px;top:969px" width="16" height="16" viewBox="0 0 24 24"><rect x="2.35" y="2.5" width="12.3" height="8.3" fill="none" stroke="#000" stroke-width="0.95"/><rect x="9.4" y="12.6" width="12.3" height="8.1" fill="none" stroke="#000" stroke-width="0.95"/><path d="M8.5 6.6 Q14.5 8 15.5 16.7" fill="none" stroke="#000" stroke-width="0.8"/><circle cx="8.5" cy="6.6" r="1.1" fill="#00ff7f" stroke="#063" stroke-width="0.5"/><circle cx="15.5" cy="16.7" r="1.1" fill="#00ff7f" stroke="#063" stroke-width="0.5"/><circle cx="5.9" cy="16.7" r="1.9" fill="#00ff7f" stroke="#063" stroke-width="0.5"/></svg>
<svg style="position:absolute;left:420px;top:969px" width="16" height="16" viewBox="0 0 24 24"><line x1="5.7" y1="18.6" x2="18.5" y2="5.7" stroke="#000" stroke-width="0.85"/><circle cx="5.7" cy="18.6" r="2.3" fill="#00ff7f" stroke="#063" stroke-width="0.5"/><circle cx="18.5" cy="5.7" r="2.3" fill="#00ff7f" stroke="#063" stroke-width="0.5"/><line x1="6.2" y1="11.2" x2="9.7" y2="8.3" stroke="#000" stroke-width="0.9"/><path d="M5 12.2 L7.8 11.6 L6.4 9.8 Z" fill="#000"/><line x1="14.5" y1="15.7" x2="18" y2="12.6" stroke="#000" stroke-width="0.9"/><path d="M19.2 11.6 L16.6 12.2 L18 14 Z" fill="#000"/></svg>
<svg style="position:absolute;left:446px;top:969px" width="16" height="16" viewBox="0 0 24 24"><line x1="3.9" y1="2.5" x2="20.8" y2="15.7" stroke="#000" stroke-width="0.85"/><line x1="3.6" y1="21.5" x2="12" y2="15" stroke="#000" stroke-width="0.85" stroke-dasharray="2.6 1.4"/><line x1="12" y1="15" x2="16" y2="11.9" stroke="#000" stroke-width="0.85"/><line x1="16" y1="11.9" x2="20.6" y2="8.3" stroke="#000" stroke-width="0.85" stroke-dasharray="1.6 1.4"/><circle cx="13.7" cy="14" r="1.4" fill="#00ff7f" stroke="#063" stroke-width="0.5"/></svg>
<svg style="position:absolute;left:472px;top:969px" width="16" height="16" viewBox="0 0 24 24"><line x1="3.8" y1="2.5" x2="12.5" y2="9.2" stroke="#000" stroke-width="0.85" stroke-dasharray="3 1.4"/><line x1="12.5" y1="9.2" x2="15" y2="11.2" stroke="#000" stroke-width="0.85"/><line x1="15" y1="11.2" x2="20.9" y2="15.7" stroke="#000" stroke-width="0.85" stroke-dasharray="1.6 1.4"/><line x1="3.3" y1="21.5" x2="12.5" y2="14.6" stroke="#000" stroke-width="0.85" stroke-dasharray="3 1.4"/><line x1="12.5" y1="14.6" x2="15" y2="12.8" stroke="#000" stroke-width="0.85"/><line x1="15" y1="12.8" x2="21" y2="8.3" stroke="#000" stroke-width="0.85" stroke-dasharray="1.6 1.4"/><circle cx="13.9" cy="10.5" r="1.3" fill="#00ff7f" stroke="#063" stroke-width="0.5"/><circle cx="13.9" cy="14" r="1.3" fill="#00ff7f" stroke="#063" stroke-width="0.5"/></svg>
<svg style="position:absolute;left:498px;top:969px" width="16" height="16" viewBox="0 0 24 24"><line x1="3.1" y1="19.1" x2="12.1" y2="12.6" stroke="#000" stroke-width="0.85"/><line x1="12.1" y1="12.6" x2="19.1" y2="7.1" stroke="#000" stroke-width="0.85" stroke-dasharray="1.8 1.4"/><circle cx="19.1" cy="7.1" r="1.6" fill="#00ff7f" stroke="#063" stroke-width="0.5"/><path d="M8.4 6 L11.6 7.4 M9.4 5.2 L11 8.6 L9.6 10.2" fill="none" stroke="#000" stroke-width="0.8"/></svg>
<svg style="position:absolute;left:524px;top:969px" width="16" height="16" viewBox="0 0 24 24"><path d="M3.3 3.5 A17.4 17.4 0 0 1 20.7 20.9" fill="none" stroke="#2b1515" stroke-width="0.85"/><path d="M3.3 6.3 A14.6 14.6 0 0 1 17.9 20.9" fill="none" stroke="#2b1515" stroke-width="0.9" stroke-dasharray="2.6 1.5"/><path d="M3.3 9.2 A11.7 11.7 0 0 1 15 20.9" fill="none" stroke="#2b1515" stroke-width="0.85"/></svg>
<svg style="position:absolute;left:550px;top:969px" width="16" height="16" viewBox="0 0 24 24"><path d="M7.8 3.4 L3.3 3.4 L3.3 20.7 L20.7 20.7 L20.7 15.9" fill="none" stroke="#000" stroke-width="0.95"/><path d="M7.8 3.4 L20.7 3.4 L20.7 15.9" fill="none" stroke="#000" stroke-width="1" stroke-dasharray="1 1.5"/><line x1="6.8" y1="1.3" x2="22.9" y2="16.8" stroke="#000" stroke-width="0.7"/><line x1="7.8" y1="4.6" x2="19.3" y2="15.9" stroke="#00ff7f" stroke-width="2.8"/></svg>
<svg style="position:absolute;left:576px;top:969px" width="16" height="16" viewBox="0 0 24 24"><path d="M9.1 3.4 L3.2 3.4 L3.2 20.7 L20.6 20.7 L20.6 15.1" fill="none" stroke="#000" stroke-width="0.95"/><path d="M9.1 3.4 L20.6 3.4 L20.6 15.1" fill="none" stroke="#000" stroke-width="1" stroke-dasharray="1 1.5"/><path d="M9.1 5.3 A9.8 9.8 0 0 1 18.9 15.1" fill="none" stroke="#00ff7f" stroke-width="2.8"/><circle cx="9.1" cy="15.1" r="1.3" fill="#000"/></svg>
<svg style="position:absolute;left:602px;top:969px" width="16" height="16" viewBox="0 0 24 24"><rect x="3.3" y="4.2" width="16.8" height="16.3" fill="none" stroke="#000" stroke-width="1" stroke-dasharray="3 1.6 1 1.6"/><line x1="3.3" y1="12.5" x2="11.5" y2="20.5" stroke="#000" stroke-width="1"/><path d="M5.9 13.8 L20.6 6.5 L19.9 8.2 Q16 12 11.5 14 Z" fill="#00ff7f" stroke="#111" stroke-width="0.5"/></svg>
<svg style="position:absolute;left:628px;top:969px" width="16" height="16" viewBox="0 0 24 24"><path d="M13.1 3.4 L3.3 3.4 L3.3 20.7 L13.1 20.7 Z" fill="none" stroke="#000" stroke-width="0.95"/><path d="M13.1 3.4 L20.5 3.4 L20.5 20.7 L13.1 20.7" fill="none" stroke="#000" stroke-width="1" stroke-dasharray="2 1.6"/><line x1="7.6" y1="12.5" x2="14" y2="12.5" stroke="#00ff7f" stroke-width="2.9"/><path d="M13.1 9.1 L18.1 12.5 L13.1 15.9 Z" fill="#00ff7f"/></svg>
<svg style="position:absolute;left:654px;top:969px" width="16" height="16" viewBox="0 0 24 24"><rect x="4.6" y="5" width="14.6" height="14" fill="#fff" stroke="#262626" stroke-width="2.6"/><circle cx="9.1" cy="15.1" r="2.3" fill="#fff" stroke="#000" stroke-width="0.9"/><circle cx="4.2" cy="4" r="2.2" fill="#00ff7f" stroke="#063" stroke-width="0.5"/><circle cx="20" cy="4" r="2.2" fill="#00ff7f" stroke="#063" stroke-width="0.5"/><circle cx="4.2" cy="19.9" r="2.2" fill="#00ff7f" stroke="#063" stroke-width="0.5"/><circle cx="20" cy="19.9" r="2.2" fill="#00ff7f" stroke="#063" stroke-width="0.5"/></svg>
<svg style="position:absolute;left:680px;top:969px" width="16" height="16" viewBox="0 0 24 24"><path d="M14.3 2.8 L19.75 7.9 L10.8 16.7 L5.2 17.2 L5.2 13.3 Z" fill="#00ff7f" stroke="#111" stroke-width="0.5"/><path d="M5.1 17.9 Q8 18.6 11.6 21.5" fill="none" stroke="#000" stroke-width="0.9"/></svg>
<svg style="position:absolute;left:706px;top:969px" width="16" height="16" viewBox="0 0 24 24"><text x="5.6" y="14.8" font-family="Liberation Sans, sans-serif" font-size="9" fill="#0a0a0a" font-weight="normal" text-anchor="middle">a</text><text x="12.8" y="14.8" font-family="Liberation Sans, sans-serif" font-size="9" fill="#0a0a0a" font-weight="normal" text-anchor="middle">b</text><text x="20.4" y="14.8" font-family="Liberation Sans, sans-serif" font-size="9" fill="#0a0a0a" font-weight="normal" text-anchor="middle">c</text><line x1="8.4" y1="6.2" x2="8.4" y2="17.7" stroke="#000" stroke-width="0.8" stroke-dasharray="1 1.1"/><line x1="16.1" y1="6.2" x2="16.1" y2="17.7" stroke="#000" stroke-width="0.8" stroke-dasharray="1 1.1"/><circle cx="3" cy="15.1" r="1.1" fill="#0a7a3a"/><circle cx="10.6" cy="15.1" r="1.1" fill="#0a7a3a"/><circle cx="18" cy="15.1" r="1.1" fill="#0a7a3a"/></svg>
<svg style="position:absolute;left:732px;top:969px" width="16" height="16" viewBox="0 0 24 24"><rect x="5.2" y="5.7" width="13.5" height="13.1" fill="none" stroke="#000" stroke-width="1.05"/><rect x="2.8" y="3.3" width="4.8" height="4.8" fill="#00ff7f"/><line x1="3.2" y1="3.7" x2="7.2" y2="7.7" stroke="#063" stroke-width="0.8"/><line x1="3.2" y1="7.7" x2="7.2" y2="3.7" stroke="#063" stroke-width="0.8"/><rect x="16.3" y="3.3" width="4.8" height="4.8" fill="#00ff7f"/><line x1="16.7" y1="3.7" x2="20.7" y2="7.7" stroke="#063" stroke-width="0.8"/><line x1="16.7" y1="7.7" x2="20.7" y2="3.7" stroke="#063" stroke-width="0.8"/><rect x="2.8" y="16.4" width="4.8" height="4.8" fill="#00ff7f"/><line x1="3.2" y1="16.8" x2="7.2" y2="20.8" stroke="#063" stroke-width="0.8"/><line x1="3.2" y1="20.8" x2="7.2" y2="16.8" stroke="#063" stroke-width="0.8"/><rect x="16.3" y="16.4" width="4.8" height="4.8" fill="#00ff7f"/><line x1="16.7" y1="16.8" x2="20.7" y2="20.8" stroke="#063" stroke-width="0.8"/><line x1="16.7" y1="20.8" x2="20.7" y2="16.8" stroke="#063" stroke-width="0.8"/></svg>
<svg style="position:absolute;left:758px;top:969px" width="16" height="16" viewBox="0 0 24 24"><rect x="3.3" y="3.8" width="17.2" height="16.5" fill="none" stroke="#000" stroke-width="1" stroke-dasharray="1.6 1.4"/><line x1="3.3" y1="12.1" x2="11.4" y2="20.3" stroke="#000" stroke-width="1"/><line x1="9.2" y1="7.9" x2="16.5" y2="15" stroke="#00ff7f" stroke-width="1.6"/><line x1="16.5" y1="7.9" x2="9.2" y2="15" stroke="#00ff7f" stroke-width="1.6"/></svg>
<div class="a" style="left:788px;top:966px;width:2px;height:22px;background:#5c5c5c;border-radius:1px;"></div>
<span class="t" style="top:968px;font-size:9.5px;color:#0c0c0c;left:800.75px;letter-spacing:-1.186px;-webkit-text-stroke:0;">Ex</span>
<div class="a" style="left:950px;top:965px;width:24px;height:24px;background:#5a998c;border-radius:3px;"></div>
<svg style="position:absolute;left:824px;top:969px" width="16" height="16" viewBox="0 0 16 16"><line x1="8" y1="2.5" x2="8" y2="13.5" stroke="#111" stroke-width="0.8" stroke-dasharray="2 1.2"/><line x1="2.5" y1="8" x2="13.5" y2="8" stroke="#111" stroke-width="0.8" stroke-dasharray="2 1.2"/></svg>
<svg style="position:absolute;left:850px;top:969px" width="16" height="16" viewBox="0 0 16 16"><circle cx="3.4" cy="2.5" r="0.85" fill="#00ff7f"/><circle cx="3.4" cy="6" r="0.85" fill="#00ff7f"/><circle cx="3.4" cy="9.6" r="0.85" fill="#00ff7f"/><circle cx="3.4" cy="13.2" r="0.85" fill="#00ff7f"/><circle cx="8" cy="2.5" r="0.85" fill="#00ff7f"/><circle cx="8" cy="6" r="0.85" fill="#00ff7f"/><circle cx="8" cy="9.6" r="0.85" fill="#00ff7f"/><circle cx="8" cy="13.2" r="0.85" fill="#00ff7f"/><circle cx="12.6" cy="2.5" r="0.85" fill="#00ff7f"/><circle cx="12.6" cy="6" r="0.85" fill="#00ff7f"/><circle cx="12.6" cy="9.6" r="0.85" fill="#00ff7f"/><circle cx="12.6" cy="13.2" r="0.85" fill="#00ff7f"/></svg>
<svg style="position:absolute;left:876px;top:969px" width="16" height="16" viewBox="0 0 16 16"><path d="M5.6 2.6 C8 5 10 5.5 13 10.6" fill="none" stroke="#201010" stroke-width="0.9"/><circle cx="5.6" cy="2.6" r="0.95" fill="#00ff7f" stroke="#063" stroke-width="0.5"/><circle cx="3.2" cy="5.6" r="0.95" fill="#00ff7f" stroke="#063" stroke-width="0.5"/><circle cx="13.6" cy="10.4" r="0.95" fill="#00ff7f" stroke="#063" stroke-width="0.5"/><circle cx="10.6" cy="13.2" r="0.95" fill="#00ff7f" stroke="#063" stroke-width="0.5"/></svg>
<svg style="position:absolute;left:902px;top:969px" width="16" height="16" viewBox="0 0 16 16"><path d="M4.8 2.8 C8 5 10 7 10.6 13" fill="none" stroke="#201010" stroke-width="0.9"/><circle cx="5.6" cy="2.4" r="0.9" fill="#00ff7f" stroke="#063" stroke-width="0.5"/><circle cx="2.6" cy="5.8" r="0.9" fill="#00ff7f" stroke="#063" stroke-width="0.5"/><circle cx="8" cy="5" r="0.9" fill="#00ff7f" stroke="#063" stroke-width="0.5"/><circle cx="8" cy="8.4" r="0.9" fill="#00ff7f" stroke="#063" stroke-width="0.5"/><circle cx="11.2" cy="7.6" r="0.9" fill="#00ff7f" stroke="#063" stroke-width="0.5"/><circle cx="13.2" cy="10.6" r="0.9" fill="#00ff7f" stroke="#063" stroke-width="0.5"/><circle cx="10.2" cy="13.4" r="0.9" fill="#00ff7f" stroke="#063" stroke-width="0.5"/></svg>
<svg style="position:absolute;left:928px;top:969px" width="16" height="16" viewBox="0 0 16 16"><path d="M2.8 7.6 C7 7.6 9.6 9.6 10.8 13.4" fill="none" stroke="#201010" stroke-width="0.9"/><line x1="6.6" y1="1.4" x2="14.4" y2="10.4" stroke="#111" stroke-width="0.8"/><circle cx="10.6" cy="6" r="1" fill="#00ff7f" stroke="#063" stroke-width="0.5"/><circle cx="3.6" cy="13.2" r="1" fill="#00ff7f" stroke="#063" stroke-width="0.5"/></svg>
<svg style="position:absolute;left:954px;top:969px" width="16" height="16" viewBox="0 0 16 16"><path d="M2 6.6 C5 6 8.6 8 9.6 13.2" fill="none" stroke="#201010" stroke-width="0.9"/><line x1="5" y1="1.2" x2="14" y2="10" stroke="#111" stroke-width="0.8"/><circle cx="9.6" cy="5.8" r="1.1" fill="#00ff7f" stroke="#063" stroke-width="0.5"/><circle cx="7.2" cy="8.4" r="1.1" fill="#00ff7f" stroke="#063" stroke-width="0.5"/></svg>
<svg style="position:absolute;left:980px;top:969px" width="16" height="16" viewBox="0 0 16 16"><path d="M2 6.6 C5 6 8.6 8 9.6 13.2" fill="none" stroke="#201010" stroke-width="0.9" stroke-dasharray="2.4 1.2"/><line x1="5" y1="1.2" x2="14" y2="10" stroke="#111" stroke-width="0.8" stroke-dasharray="2.4 1.2"/><circle cx="9" cy="4.8" r="0.9" fill="#00ff7f" stroke="#063" stroke-width="0.5"/><circle cx="12.6" cy="5" r="0.9" fill="#00ff7f" stroke="#063" stroke-width="0.5"/><circle cx="4.6" cy="10.6" r="0.9" fill="#00ff7f" stroke="#063" stroke-width="0.5"/><circle cx="8.6" cy="10.8" r="0.9" fill="#00ff7f" stroke="#063" stroke-width="0.5"/></svg>
<svg style="position:absolute;left:1006px;top:969px" width="16" height="16" viewBox="0 0 16 16"><line x1="3.2" y1="3" x2="12.8" y2="13" stroke="#111" stroke-width="0.8"/><line x1="12.8" y1="3" x2="3.2" y2="13" stroke="#111" stroke-width="0.8"/><circle cx="8" cy="8" r="1.2" fill="#00ff7f" stroke="#063" stroke-width="0.5"/></svg>
<svg style="position:absolute;left:1037px;top:969px" width="16" height="16" viewBox="0 0 16 16"><rect x="2" y="6.6" width="12" height="2.8" fill="#ddd"/><line x1="2" y1="8" x2="14" y2="8" stroke="#2c8" stroke-width="1"/><circle cx="8" cy="8" r="0.8" fill="#00ff7f" stroke="#063" stroke-width="0.5"/></svg>
<svg style="position:absolute;left:1063px;top:969px" width="16" height="16" viewBox="0 0 16 16"><rect x="6.6" y="2" width="2.8" height="12" fill="#ddd"/><line x1="8" y1="2" x2="8" y2="14" stroke="#2c8" stroke-width="1"/><circle cx="8" cy="8" r="0.8" fill="#00ff7f" stroke="#063" stroke-width="0.5"/></svg>
<svg style="position:absolute;left:1089px;top:969px" width="16" height="16" viewBox="0 0 16 16"><rect x="2" y="6.6" width="12" height="2.8" fill="#ddd"/><rect x="6.6" y="2" width="2.8" height="12" fill="#ddd"/><line x1="2" y1="8" x2="14" y2="8" stroke="#2c8" stroke-width="1"/><line x1="8" y1="2" x2="8" y2="14" stroke="#2c8" stroke-width="1"/><circle cx="8" cy="8" r="0.8" fill="#00ff7f" stroke="#063" stroke-width="0.5"/></svg>
<svg style="position:absolute;left:1119px;top:969px" width="16" height="16" viewBox="0 0 16 16"><path d="M4 12 L9 7" fill="none" stroke="#eee" stroke-width="3" stroke-linecap="round"/><line x1="9" y1="7" x2="12.5" y2="3.5" stroke="#111" stroke-width="0.9"/><circle cx="10" cy="6" r="1.1" fill="#00ff7f" stroke="#063" stroke-width="0.5"/><line x1="7" y1="4" x2="13" y2="9" stroke="#111" stroke-width="0.6"/></svg>
<svg style="position:absolute;left:1145px;top:969px" width="16" height="16" viewBox="0 0 16 16"><rect x="2" y="4" width="5" height="4.6" fill="#000" rx="0.6"/><path d="M3.2 4 L3.2 2.8 A1.3 1.3 0 0 1 5.8 2.8 L5.8 4" fill="none" stroke="#000" stroke-width="0.9"/><path d="M6.4 14.6 L11.4 9.6" fill="none" stroke="#eee" stroke-width="3" stroke-linecap="round"/><line x1="11.4" y1="9.6" x2="14.9" y2="6.1" stroke="#111" stroke-width="0.9"/><circle cx="12.4" cy="8.6" r="1.1" fill="#00ff7f" stroke="#063" stroke-width="0.5"/><line x1="9.4" y1="6.6" x2="15.4" y2="11.6" stroke="#111" stroke-width="0.6"/></svg>
<div class="a" style="left:1176px;top:966px;width:2px;height:22px;background:#5c5c5c;border-radius:1px;"></div>
<div class="a" style="left:1182px;top:965px;width:24px;height:24px;background:#5a998c;border-radius:3px;"></div>
<div class="a" style="left:1208px;top:965px;width:24px;height:24px;background:#5a998c;border-radius:3px;"></div>
<svg style="position:absolute;left:1186px;top:969px" width="16" height="16" viewBox="0 0 16 16"><rect x="2.2" y="2.6" width="11.6" height="9.2" fill="none" stroke="#0a0a0a" stroke-width="1" rx="0.8"/><rect x="3.2" y="3.6" width="2.2" height="7.2" fill="#00ff7f"/><rect x="6.4" y="12" width="3.2" height="1.3" fill="#000"/></svg>
<svg style="position:absolute;left:1212px;top:969px" width="16" height="16" viewBox="0 0 16 16"><rect x="2.2" y="2.6" width="11.6" height="9.2" fill="none" stroke="#0a0a0a" stroke-width="1" rx="0.8"/><rect x="10.6" y="3.6" width="2.2" height="7.2" fill="#00ff7f"/><rect x="6.4" y="12" width="3.2" height="1.3" fill="#000"/></svg>
<svg style="position:absolute;left:1238px;top:969px" width="16" height="16" viewBox="0 0 16 16"><rect x="2.2" y="2.6" width="11.6" height="9.2" fill="none" stroke="#0a0a0a" stroke-width="1" rx="0.8"/><rect x="3.2" y="3.4" width="9.6" height="1.8" fill="#00ff7f"/><rect x="6.4" y="12" width="3.2" height="1.3" fill="#000"/></svg>
<svg style="position:absolute;left:1264px;top:969px" width="16" height="16" viewBox="0 0 16 16"><rect x="2.2" y="2.6" width="11.6" height="9.2" fill="none" stroke="#0a0a0a" stroke-width="1" rx="0.8"/><rect x="3.2" y="8.8" width="9.6" height="2" fill="#00ff7f"/><rect x="6.4" y="12" width="3.2" height="1.3" fill="#000"/></svg>
<svg style="position:absolute;left:1290px;top:969px" width="16" height="16" viewBox="0 0 16 16"><rect x="2.2" y="2.6" width="11.6" height="9.2" fill="none" stroke="#0a0a0a" stroke-width="1" rx="0.8"/><rect x="5.4" y="4.6" width="5.4" height="4.4" fill="#00ff7f"/><rect x="6.4" y="12" width="3.2" height="1.3" fill="#000"/></svg>
<svg style="position:absolute;left:1330px;top:969px" width="16" height="16" viewBox="0 0 16 16"><line x1="1.6" y1="8.6" x2="6.4" y2="8.6" stroke="#000" stroke-width="1.6"/><line x1="4" y1="6.2" x2="4" y2="11" stroke="#000" stroke-width="1.6"/><path d="M13.4 3 L8.6 3 L8.6 13.4 L13.4 13.4 M8.6 8 L13.4 8" fill="none" stroke="#4a4a4a" stroke-width="1.2"/></svg>
<svg style="position:absolute;left:1356px;top:969px" width="16" height="16" viewBox="0 0 16 16"><line x1="1.6" y1="8.6" x2="6.4" y2="8.6" stroke="#000" stroke-width="1.6"/><line x1="4" y1="6.2" x2="4" y2="11" stroke="#000" stroke-width="1.6"/><rect x="8.6" y="3" width="4.8" height="5" fill="none" stroke="#2a9d6a" stroke-width="1"/><rect x="8.6" y="8.4" width="4.8" height="5" fill="none" stroke="#2a9d6a" stroke-width="1"/></svg>
<div class="a" style="left:1320px;top:966px;width:2px;height:22px;background:#5c5c5c;border-radius:1px;"></div>
<span class="t" style="top:1000.3px;font-size:12.5px;color:#f2f2f2;left:6.00px;letter-spacing:-0.026px;">23.8766 , 134.7441</span>
<span class="t" style="top:1025.3px;font-size:12.5px;color:#f2f2f2;left:6.00px;letter-spacing:0.155px;">136.8432 &lt; 80°</span>
<span class="t" style="top:1000.3px;font-size:12.5px;color:#f2f2f2;left:197.70px;letter-spacing:-0.026px;">23.8766 , 134.7441</span>
<span class="t" style="top:1025.3px;font-size:12.5px;color:#f2f2f2;left:197.70px;letter-spacing:0.155px;">136.8432 &lt; 80°</span>
<span class="t" style="top:1000.3px;font-size:12.5px;color:#f2f2f2;left:695.00px;letter-spacing:0.050px;">Selected</span>
<span class="t" style="top:1000.3px;font-size:12.5px;color:#f2f2f2;left:746.70px;letter-spacing:0.317px;">Total Length</span>
<span class="t" style="top:1024.7px;font-size:12.5px;color:#f2f2f2;left:695.00px;">0</span>
<span class="t" style="top:1024.7px;font-size:12.5px;color:#f2f2f2;left:746.70px;">0</span>
<span class="t" style="top:1000.3px;font-size:12.5px;color:#f2f2f2;left:826.00px;letter-spacing:0.131px;">Current Layer</span>
<span class="t" style="top:1024.7px;font-size:12.5px;color:#f2f2f2;left:826.00px;letter-spacing:0.081px;">layer 2</span>
<span class="t" style="top:1000.3px;font-size:12.5px;color:#f2f2f2;left:948.30px;letter-spacing:0.077px;">Grid Status</span>
<span class="t" style="top:1025.3px;font-size:12.5px;color:#f2f2f2;left:948.30px;letter-spacing:-0.111px;">10 / 100</span>
<svg style="position:absolute;left:496px;top:994px" width="84" height="52" viewBox="0 0 84 52"><path d="M11.1 17.1 C13 18.5 16 20.8 20.7 20.5 C25 20.3 27 19 28 15 C29.5 10 32 6.7 37.6 6.7 L46.2 6.7 C50.5 6.7 53 9.5 53 12 L53 14.5" fill="none" stroke="#000" stroke-width="1.9" stroke-linecap="round"/><rect x="34.5" y="15" width="37.4" height="31.9" fill="#fff" stroke="#000" stroke-width="2" rx="4.5"/><line x1="34.5" y1="27.1" x2="71.9" y2="27.1" stroke="#000" stroke-width="1.8"/><line x1="47" y1="15" x2="47" y2="27" stroke="#000" stroke-width="1.9"/><line x1="59.7" y1="15" x2="59.7" y2="27" stroke="#000" stroke-width="1.9"/><rect x="47.9" y="15.6" width="10.8" height="10.6" fill="#00ff7f"/></svg>
<div class="a" style="left:0px;top:1047px;width:1920px;height:33px;background:#2b2b2b;border-top:1px solid #202020;box-sizing:border-box;"></div>
<svg style="position:absolute;left:7px;top:1055px" width="18" height="18" viewBox="0 0 18 18"><rect x="0" y="0" width="18" height="18" fill="#16a085"/><rect x="5" y="5.2" width="1.6" height="12.8" fill="#2b2b2b"/><rect x="5" y="5.2" width="8" height="1.6" fill="#2b2b2b"/><rect x="11.6" y="0" width="1.6" height="18" fill="#2b2b2b"/><rect x="5" y="5.2" width="6.6" height="1.6" fill="#2b2b2b"/><rect x="6.6" y="6.8" width="5" height="11.2" fill="#16a085"/><rect x="6.6" y="6.8" width="0" height="0" fill="#16a085"/></svg><span class="t" style="top:1054.3px;font-size:15px;color:#fff;font-weight:700;-webkit-text-stroke:0px currentColor;left:32.80px;letter-spacing:0.012px;">Menu</span><div class="a" style="left:84px;top:1050px;width:1px;height:28px;background:#454545;"></div><div class="a" style="left:100px;top:1060px;width:5.4px;height:6px;background:#f0f0f0;"></div><div class="a" style="left:108.7px;top:1060px;width:5.4px;height:6px;background:#f0f0f0;"></div><div class="a" style="left:117.4px;top:1060px;width:5.4px;height:6px;background:#f0f0f0;"></div><svg style="position:absolute;left:141px;top:1055.3px" width="20" height="17.5" viewBox="0 0 20 17.5"><rect x="0" y="0" width="20" height="17.5" fill="#16a085" rx="0.5"/><rect x="0" y="0" width="20" height="1.2" fill="#0e7f6a"/><rect x="5.5" y="15.6" width="9" height="1.9" fill="#0b4a3e"/></svg><div class="a" style="left:175px;top:1050px;width:1px;height:28px;background:#454545;"></div><svg style="position:absolute;left:194px;top:1054px" width="20" height="18" viewBox="0 0 20 18"><rect x="0" y="0" width="20" height="18" fill="#4a4a4a" rx="1"/><path d="M3.5 6.5 L6.5 8.5 L3.5 10.5" fill="none" stroke="#fff" stroke-width="1.3"/><line x1="8.5" y1="8.6" x2="14.5" y2="8.6" stroke="#fff" stroke-width="1.4"/></svg><svg style="position:absolute;left:232px;top:1054px" width="20" height="20" viewBox="0 0 20 20"><path d="M0 3 Q0 2 1 2 L7 2 L9 4 L19 4 Q20 4 20 5 L20 17 Q20 18 19 18 L1 18 Q0 18 0 17 Z" fill="#138a72"/><rect x="9.5" y="4.6" width="9.4" height="1.4" fill="#e8e8e8"/><path d="M0 7 L20 7 L20 17 Q20 18 19 18 L1 18 Q0 18 0 17 Z" fill="#16a085"/></svg><svg style="position:absolute;left:270px;top:1054px" width="20" height="18" viewBox="0 0 20 18"><rect x="0" y="0" width="20" height="18" fill="#3a3a3a"/><line x1="0" y1="2" x2="20" y2="2" stroke="#4a4a4a" stroke-width="0.6"/><line x1="0" y1="4.5" x2="20" y2="4.5" stroke="#4a4a4a" stroke-width="0.6"/><line x1="0" y1="7" x2="20" y2="7" stroke="#4a4a4a" stroke-width="0.6"/><line x1="0" y1="9.5" x2="20" y2="9.5" stroke="#4a4a4a" stroke-width="0.6"/><path d="M0 18 L0 8 C2 3 5 3 6.5 7 C8 11 10 11 12 9 C14 7 17 6 20 10 L20 18 Z" fill="#3fd07a"/></svg><svg style="position:absolute;left:308px;top:1053px" width="20" height="20" viewBox="0 0 20 20"><rect x="0.5" y="0.5" width="19" height="19" fill="#b8b8b8" stroke="#8a8a8a" stroke-width="1" stroke-dasharray="1 1"/><rect x="8.2" y="3" width="3.6" height="10" fill="#e84a5a" rx="1.8"/><circle cx="10" cy="14.2" r="3.4" fill="#e84a5a"/><rect x="9.4" y="4.2" width="1.2" height="5" fill="#f4b0b8" rx="0.6"/></svg><svg style="position:absolute;left:346px;top:1053px" width="20" height="20" viewBox="0 0 20 20"><rect x="0" y="0" width="20" height="20" fill="#4a4a4a"/><path d="M4 5.5 L16 2.5 L16 7 L8 9.5 L16 12.5 L16 17 L4 19.5 L4 15 L12 12.8 L4 10 Z" fill="#ff9c1a"/></svg><svg style="position:absolute;left:383px;top:1052px" width="22" height="22" viewBox="0 0 22 22"><path d="M15 0.5 L21 3.2 L21 18.8 L15 21.5 L3.5 11 Z" fill="#1f9cf0"/><path d="M15 0.5 L15 21.5 L21 18.8 L21 3.2 Z" fill="#0a6fc2"/><path d="M15 6.5 L15 15.5 L9 11 Z" fill="#2b2b2b"/><path d="M1 7 L2.8 5.4 L9.6 11 L2.8 16.6 L1 15 L5.8 11 Z" fill="#0a7bd6"/></svg><svg style="position:absolute;left:420.5px;top:1052px" width="22" height="22" viewBox="0 0 22 22"><path d="M11 0.5 L21.5 11 L11 21.5 L0.5 11 Z" fill="#d9302c" stroke-linejoin="round"/><line x1="9" y1="6.5" x2="9" y2="16" stroke="#fff" stroke-width="1.3"/><line x1="9" y1="9" x2="13.5" y2="12.5" stroke="#fff" stroke-width="1.3"/><circle cx="9" cy="6.5" r="1.6" fill="#fff"/><circle cx="9" cy="16" r="1.6" fill="#fff"/><circle cx="13.8" cy="12.6" r="1.6" fill="#fff"/></svg><svg style="position:absolute;left:460px;top:1053px" width="20" height="20" viewBox="0 0 20 20"><path d="M0 0 L17 0 L20 3 L20 20 L0 20 Z" fill="#3a4fa3"/><rect x="0" y="18" width="20" height="2" fill="#2c3c80"/><circle cx="15.6" cy="4" r="1.5" fill="#ff7a1a"/></svg><span class="t" style="top:1055.6px;font-size:18.5px;color:#f5c84a;font-weight:700;-webkit-text-stroke:0px currentColor;left:461.70px;letter-spacing:-1.500px;">Ki</span><svg style="position:absolute;left:498px;top:1053px" width="20" height="20" viewBox="0 0 20 20"><rect x="0" y="0" width="20" height="20" fill="#1d5fd6"/><rect x="1.6" y="2.6" width="16.8" height="14.8" fill="#3cc4f0"/><path d="M2 10.5 L4.5 10.5 L6 14 L8 3.8 L10.4 15.2 L12.2 6 L13.6 11 L15 8 L16 10.5 L18.4 10.5" fill="none" stroke="#0a2a6c" stroke-width="1.6"/></svg><svg style="position:absolute;left:536px;top:1053px" width="20" height="20" viewBox="0 0 20 20"><rect x="0" y="0" width="20" height="20" fill="#3a6fbd"/><path d="M7.5 16.5 C8.5 11 10 7 11 4.5 C8 4 5.5 6 6.5 8.5 M11 4.5 C15 4 16 8 12.5 10 C11 10.8 9.6 10.6 9.2 10.2 M7.5 16.5 C7 18 5 18 4.4 16.6" fill="none" stroke="#fff" stroke-width="1.5" stroke-linecap="round"/></svg><svg style="position:absolute;left:574px;top:1053px" width="20" height="20" viewBox="0 0 20 20"><rect x="0.5" y="0.5" width="19" height="19" fill="#b8b8b8" stroke="#8a8a8a" stroke-width="1" stroke-dasharray="1 1"/><path d="M10 3.5 C12.5 3.5 13 6 13 8 C14.5 10 15.5 13 15 16 L5 16 C4.5 13 5.5 10 7 8 C7 6 7.5 3.5 10 3.5 Z" fill="#777"/><ellipse cx="10" cy="12" rx="2.4" ry="3.2" fill="#aaa"/><circle cx="8.9" cy="6.4" r="0.7" fill="#ddd"/><circle cx="11.1" cy="6.4" r="0.7" fill="#ddd"/></svg><svg style="position:absolute;left:612px;top:1053px" width="20" height="20" viewBox="0 0 20 20"><rect x="0" y="0" width="20" height="20" fill="#f39a3a" rx="5"/><circle cx="5.2" cy="14.8" r="1.9" fill="#fff"/><path d="M3.4 9.4 A7.2 7.2 0 0 1 10.6 16.6" fill="none" stroke="#fff" stroke-width="2.2"/><path d="M3.4 4.8 A11.8 11.8 0 0 1 15.2 16.6" fill="none" stroke="#fff" stroke-width="2.2"/></svg><svg style="position:absolute;left:650px;top:1054px" width="20" height="18" viewBox="0 0 20 18"><rect x="0" y="0" width="20" height="18" fill="#ff7b6b"/><circle cx="13.8" cy="7" r="3" fill="#fff0d0"/><rect x="0" y="13" width="20" height="5" fill="#d63384"/><path d="M0 13 L2 12 L5 12.6 L8 12 L12 12.8 L16 12 L20 12.6 L20 14 L0 14 Z" fill="#7a2a4a"/></svg><svg style="position:absolute;left:687px;top:1052px" width="22" height="22" viewBox="0 0 22 22"><path d="M1.5 9 C1 6 4 4.5 7 5 C10 5.5 13 5 15.5 3.5 C18 2 20.5 1 20.5 1 C21 6 19 12 15.5 15.5 C12 18.5 7 18.5 4 15.5 C2.5 14 1.8 11.5 1.5 9 Z" fill="#6b5a45"/><path d="M1 11 C0.5 8.5 3 8 4.5 9.5 C5.5 11 4 13.5 2.5 13 C1.6 12.7 1.2 12 1 11 Z" fill="#3a3a3a"/><circle cx="7" cy="8.5" r="2.6" fill="#fff"/><circle cx="12" cy="8.5" r="2.6" fill="#fff"/><circle cx="7.4" cy="8.7" r="1.2" fill="#111"/><circle cx="12.4" cy="8.7" r="1.2" fill="#111"/></svg><svg style="position:absolute;left:725px;top:1052px" width="22" height="22" viewBox="0 0 22 22"><ellipse cx="11" cy="9" rx="9.5" ry="8" fill="#6a3a85"/><circle cx="7.6" cy="7" r="2.6" fill="#fff"/><circle cx="14.4" cy="7" r="2.6" fill="#fff"/><circle cx="7.9" cy="7.2" r="1.3" fill="#2a4ad0"/><circle cx="14.1" cy="7.2" r="1.3" fill="#2a4ad0"/><path d="M8.6 10 L13.4 10 L12 20 L11 21.5 L10 20 Z" fill="#9a9a9a" stroke="#777" stroke-width="0.4"/></svg><svg style="position:absolute;left:764px;top:1053px" width="20" height="20" viewBox="0 0 20 20"><path d="M5.5 1.5 L14.5 1.5 L16 3.2 L18 3.4 L19.2 6.2 L18.4 8 L16.6 15.5 L10 20 L3.4 15.5 L1.6 8 L0.8 6.2 L2 3.4 L4 3.2 Z" fill="#f2542d"/><path d="M10 4.5 L13.5 4.8 L15.4 7.6 L14 10.6 L12.6 12 L10 14.5 L7.4 12 L6 10.6 L4.6 7.6 L6.5 4.8 Z" fill="#fff"/><path d="M10 6.5 L12.4 7.8 L11.4 10 L10 11.4 L8.6 10 L7.6 7.8 Z" fill="#f2542d"/></svg><svg style="position:absolute;left:801px;top:1052px" width="22" height="22" viewBox="0 0 22 22"><path d="M15 0.5 L21 3.2 L21 18.8 L15 21.5 L3.5 11 Z" fill="#1f9cf0"/><path d="M15 0.5 L15 21.5 L21 18.8 L21 3.2 Z" fill="#0a6fc2"/><path d="M15 6.5 L15 15.5 L9 11 Z" fill="#2b2b2b"/><path d="M1 7 L2.8 5.4 L9.6 11 L2.8 16.6 L1 15 L5.8 11 Z" fill="#0a7bd6"/></svg><div class="a" style="left:834px;top:1048px;width:32px;height:32px;background:#6e6e6e;"></div><svg style="position:absolute;left:839px;top:1052px" width="22" height="22" viewBox="0 0 22 22"><circle cx="11" cy="11" r="8.6" fill="#fff" stroke="#6ab544" stroke-width="3.4"/><rect x="0.5" y="8.4" width="21" height="3.2" fill="#2a2a2a"/><rect x="0.5" y="7.2" width="5.5" height="5.8" fill="#3a3a3a"/></svg><div class="a" style="left:188px;top:1078px;width:32px;height:2px;background:#5fa899;"></div><div class="a" style="left:226px;top:1078px;width:32px;height:2px;background:#5fa899;"></div><div class="a" style="left:264px;top:1078px;width:32px;height:2px;background:#5fa899;"></div><div class="a" style="left:302px;top:1078px;width:32px;height:2px;background:#5fa899;"></div><div class="a" style="left:340px;top:1078px;width:32px;height:2px;background:#5fa899;"></div><div class="a" style="left:492px;top:1078px;width:32px;height:2px;background:#5fa899;"></div><div class="a" style="left:530px;top:1078px;width:32px;height:2px;background:#5fa899;"></div><div class="a" style="left:720px;top:1078px;width:32px;height:2px;background:#5fa899;"></div><div class="a" style="left:758px;top:1078px;width:32px;height:2px;background:#5fa899;"></div><div class="a" style="left:796px;top:1078px;width:32px;height:2px;background:#5fa899;"></div><div class="a" style="left:834px;top:1078px;width:32px;height:2px;background:#5fa899;"></div><svg style="position:absolute;left:189.3px;top:1046.8px" width="15" height="15" viewBox="0 0 15 15"><circle cx="7.5" cy="7.5" r="7.5" fill="#454545"/></svg><span class="t" style="top:1045.6px;font-size:10.5px;color:#f0f0f0;font-weight:700;-webkit-text-stroke:0px currentColor;left:196.8px;transform:translateX(-50%);">2</span><svg style="position:absolute;left:227.3px;top:1046.8px" width="15" height="15" viewBox="0 0 15 15"><circle cx="7.5" cy="7.5" r="7.5" fill="#454545"/></svg><span class="t" style="top:1045.6px;font-size:10.5px;color:#f0f0f0;font-weight:700;-webkit-text-stroke:0px currentColor;left:234.8px;transform:translateX(-50%);">3</span><svg style="position:absolute;left:758.3px;top:1046.8px" width="15" height="15" viewBox="0 0 15 15"><circle cx="7.5" cy="7.5" r="7.5" fill="#454545"/></svg><span class="t" style="top:1045.6px;font-size:10.5px;color:#f0f0f0;font-weight:700;-webkit-text-stroke:0px currentColor;left:765.8px;transform:translateX(-50%);">3</span><div class="a" style="left:1488px;top:1051px;width:46px;height:26px;background:#6f6f6f;border:1px solid #5fa899;box-sizing:border-box;"></div><div class="a" style="left:1540px;top:1051px;width:46px;height:26px;background:#242424;border:1px solid #1a1a1a;box-sizing:border-box;"></div><svg style="position:absolute;left:1593.5px;top:1054.5px" width="17" height="17" viewBox="0 0 17 17"><rect x="1.2" y="3.2" width="10.6" height="7.4" fill="none" stroke="#f0f0f0" stroke-width="1.7"/><path d="M14 6.2 L15.4 6.2 L15.4 13.6 L4.8 13.6 L4.8 12.4" fill="none" stroke="#f0f0f0" stroke-width="1.7"/></svg><div class="a" style="left:1619px;top:1050px;width:1px;height:28px;background:#454545;"></div><svg style="position:absolute;left:1628.5px;top:1054px" width="16" height="18" viewBox="0 0 16 18"><ellipse cx="8" cy="9" rx="5.6" ry="8" fill="#555"/><path d="M5 5.8 L11 12 L8 14.8 L8 3.2 L11 6 L5 12.2" fill="none" stroke="#8a8a8a" stroke-width="1"/></svg><svg style="position:absolute;left:1655.5px;top:1054.1px" width="17" height="19" viewBox="0 0 17 19"><path d="M6.6 4.4 A1.9 1.9 0 0 1 10.4 4.4 L10.4 9.6 A4.3 4.3 0 1 1 6.6 9.6 Z" fill="none" stroke="#f0f0f0" stroke-width="1.9"/></svg><svg style="position:absolute;left:1684px;top:1054px" width="16" height="18" viewBox="0 0 16 18"><path d="M8 0.8 L15 3.4 L15 8.6 C15 12.5 12 15.4 8 17 C4 15.4 1 12.5 1 8.6 L1 3.4 Z" fill="#e6e6e6"/><path d="M4.4 8.8 L7 11.4 L11.8 6.2" fill="none" stroke="#2b2b2b" stroke-width="1.9"/></svg><svg style="position:absolute;left:1710px;top:1053px" width="20" height="20" viewBox="0 0 20 20"><rect x="7" y="0.5" width="12.4" height="13.4" fill="#d4d4d4"/><line x1="13.4" y1="3.2" x2="18" y2="3.2" stroke="#8e8e8e" stroke-width="0.9"/><line x1="13.4" y1="5.8" x2="18" y2="5.8" stroke="#8e8e8e" stroke-width="0.9"/><rect x="0.6" y="6" width="12.6" height="13.6" fill="#ececec"/><line x1="2.6" y1="10.2" x2="11.2" y2="10.2" stroke="#7a7a7a" stroke-width="1"/><line x1="2.6" y1="12.8" x2="11.2" y2="12.8" stroke="#7a7a7a" stroke-width="1"/><line x1="2.6" y1="15.4" x2="11.2" y2="15.4" stroke="#7a7a7a" stroke-width="1"/><line x1="2.6" y1="18" x2="11.2" y2="18" stroke="#7a7a7a" stroke-width="1"/></svg><div class="a" style="left:1736.5px;top:1050px;width:1px;height:28px;background:#454545;"></div><svg style="position:absolute;left:1747px;top:1055px" width="14" height="16" viewBox="0 0 14 16"><rect x="1.5" y="1" width="11" height="14" fill="#f0f0f0" rx="1.5"/><circle cx="7" cy="7.2" r="3.6" fill="#2b2b2b"/><circle cx="7" cy="7.2" r="1.6" fill="#f0f0f0"/><line x1="3" y1="15.6" x2="11" y2="15.6" stroke="#2b2b2b" stroke-width="1"/></svg><svg style="position:absolute;left:1772px;top:1055.5px" width="16" height="15" viewBox="0 0 16 15"><rect x="1" y="1.5" width="14" height="9.5" fill="none" stroke="#f0f0f0" stroke-width="1.8" rx="0.8"/><path d="M5 11.5 L6.2 13.5 L9.8 13.5 L11 11.5 Z" fill="#f0f0f0"/></svg><svg style="position:absolute;left:1798px;top:1055px" width="16" height="16" viewBox="0 0 16 16"><path d="M5.2 2.4 L14 0.8 L14 11.6 M5.2 2.4 L5.2 13.2" fill="none" stroke="#f0f0f0" stroke-width="1.8"/><path d="M5.2 2.4 L14 0.8 L14 3.6 L5.2 5.2 Z" fill="#f0f0f0"/><ellipse cx="3.4" cy="13.2" rx="2.7" ry="2.2" fill="#f0f0f0"/><ellipse cx="12.2" cy="11.6" rx="2.7" ry="2.2" fill="#f0f0f0"/></svg><svg style="position:absolute;left:1823px;top:1055px" width="18" height="16" viewBox="0 0 18 16"><rect x="1" y="1" width="16" height="11" fill="none" stroke="#f0f0f0" stroke-width="1.6" rx="1"/><rect x="7" y="12.6" width="4" height="1.6" fill="#f0f0f0"/><rect x="4.5" y="14.2" width="9" height="1.5" fill="#f0f0f0"/></svg><span class="t" style="top:1051.5px;font-size:8.5px;color:#f0f0f0;font-weight:700;-webkit-text-stroke:0px currentColor;left:1832px;transform:translateX(-50%);">zz</span><span class="t" style="top:1054px;font-size:15.5px;color:#fff;font-weight:700;-webkit-text-stroke:0px currentColor;left:1850.00px;letter-spacing:-0.087px;">20:31</span><svg style="position:absolute;left:1900px;top:1055.5px" width="14" height="15" viewBox="0 0 14 15"><circle cx="7" cy="4.2" r="3.4" fill="#f0f0f0"/><path d="M0.5 15 C0.5 10.5 3.5 8.8 7 8.8 C10.5 8.8 13.5 10.5 13.5 15 Z" fill="#f0f0f0"/></svg></div></body></html>
